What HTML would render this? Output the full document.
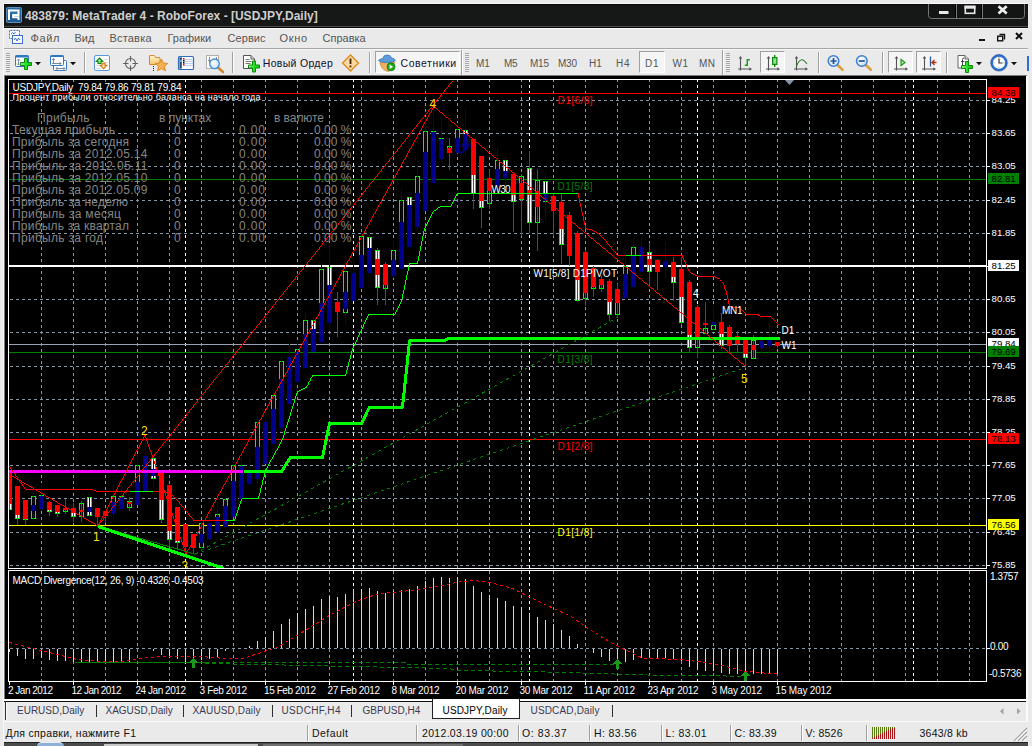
<!DOCTYPE html>
<html lang="ru"><head><meta charset="utf-8"><title>483879: MetaTrader 4 - RoboForex - [USDJPY,Daily]</title>
<style>
html,body{margin:0;padding:0}
body{width:1032px;height:746px;overflow:hidden;background:#eaeaea;position:relative;font-family:"Liberation Sans",sans-serif}
.t{position:absolute;white-space:nowrap;font-family:"Liberation Sans",sans-serif}
.r{position:absolute}
#win{position:absolute;left:4px;top:4px;width:1024px;height:742px;background:#eaeaea}
#chart{position:absolute;left:0;top:0}
svg text{font-family:"Liberation Sans",sans-serif}
</style></head><body>
<div id="win"></div>

<div id="titlebar" class="r" style="left:4px;top:4px;width:1024px;height:24px;background:#161818;box-sizing:border-box;border-top:1px solid #050505;border-bottom:1px solid #080808;box-shadow:inset 0 -1px 0 #4a4c4c"></div>
<svg class="r" style="left:6px;top:7px" width="17" height="17" viewBox="0 0 17 17">
<rect x="0.5" y="0.5" width="15" height="15" rx="1" fill="#1f5c8f" stroke="#5b8fc0"/>
<rect x="1.5" y="1.5" width="13" height="6" fill="#2f79b3" opacity=".8"/>
<path d="M3 13V3.5h9.5v4.5H7.2v2.2h5.3V13" fill="none" stroke="#fff" stroke-width="2"/>
</svg>
<span id="t1" class="t" style="left:24.9px;top:9.34px;font-size:12px;line-height:14px;color:#cfcfcf;font-weight:bold;">483879: MetaTrader 4 - RoboForex - [USDJPY,Daily]</span>
<svg class="r" style="left:926px;top:4px" width="102" height="17" viewBox="0 0 102 17">
<path d="M2.500 0V11.500Q2.500 14.500 5.500 14.500H95.500Q98.500 14.500 98.500 11.500V0" fill="#131414" stroke="#747676"/>
<path d="M30.5 0V14M56.5 0V14" stroke="#7a7a7a"/>
<path d="M29.5 0V14M55.5 0V14" stroke="#000"/>
<rect x="13" y="7" width="9.5" height="3" fill="#e8e8e8"/>
<rect x="39.300" y="2.500" width="9.400" height="6.800" fill="none" stroke="#e8e8e8" stroke-width="1.600"/>
<rect x="38.500" y="1.700" width="11" height="3" fill="#e8e8e8"/>
<path d="M72.500 2.300l8.200 7.200M80.700 2.300l-8.200 7.200" stroke="#eaeaea" stroke-width="2.800"/>
</svg>
<div id="menubar" class="r" style="left:4px;top:28px;width:1024px;height:20px;background:#eaeaea"></div>
<svg class="r" style="left:8px;top:29px" width="16" height="16" viewBox="0 0 16 16">
<rect x="1.5" y="1.5" width="10" height="8" fill="#fff" stroke="#3b6fd0" stroke-dasharray="1 0.5"/>
<rect x="4.5" y="6.5" width="10" height="8" fill="#fff" stroke="#3b6fd0"/>
<path d="M6 11l1.5-2 1.5 3 1.5-3 1.5 2" fill="none" stroke="#3b6fd0"/>
<path d="M3 5l1.5-1.5L6 5l1.5-2" fill="none" stroke="#3b6fd0"/>
</svg>
<span id="t2" class="t" style="left:30.5px;top:31.69px;font-size:11px;line-height:13px;color:#555;letter-spacing:0.651px;">Файл</span>
<span id="t3" class="t" style="left:74.5px;top:31.69px;font-size:11px;line-height:13px;color:#555;">Вид</span>
<span id="t4" class="t" style="left:109.5px;top:31.69px;font-size:11px;line-height:13px;color:#555;letter-spacing:0.185px;">Вставка</span>
<span id="t5" class="t" style="left:167.5px;top:31.69px;font-size:11px;line-height:13px;color:#555;">Графики</span>
<span id="t6" class="t" style="left:227.5px;top:31.69px;font-size:11px;line-height:13px;color:#555;letter-spacing:0.066px;">Сервис</span>
<span id="t7" class="t" style="left:279.5px;top:31.69px;font-size:11px;line-height:13px;color:#555;letter-spacing:0.646px;">Окно</span>
<span id="t8" class="t" style="left:322.5px;top:31.69px;font-size:11px;line-height:13px;color:#555;">Справка</span>
<svg class="r" style="left:976px;top:28px" width="52" height="20" viewBox="0 0 52 20">
<rect x="3" y="11" width="6" height="2" fill="#111"/>
<path d="M23.5 6.500h5v5" fill="none" stroke="#111" stroke-width="1.4"/>
<rect x="21.7" y="8.200" width="5" height="4.600" fill="#eaeaea" stroke="#111" stroke-width="1.4"/>
<path d="M40 5l6 6M46 5l-6 6" stroke="#111" stroke-width="2"/>
</svg>
<div class="r" style="left:4px;top:48px;width:1024px;height:1px;background:#a6a6a6;"></div>
<div class="r" style="left:4px;top:49px;width:1024px;height:1px;background:#f6f6f6;"></div>
<div class="r" style="left:4px;top:28px;width:1024px;height:1px;background:#fbfbfb;"></div>
<div class="r" style="left:4px;top:3px;width:1024px;height:1px;background:#fbfbfb;"></div>
<div id="toolbar" class="r" style="left:4px;top:50px;width:1024px;height:25px;background:#eaeaea"></div>
<div class="r" style="left:6px;top:53px;width:4px;height:1px;background:#a8a8a8;"></div><div class="r" style="left:6px;top:55px;width:4px;height:1px;background:#a8a8a8;"></div><div class="r" style="left:6px;top:57px;width:4px;height:1px;background:#a8a8a8;"></div><div class="r" style="left:6px;top:59px;width:4px;height:1px;background:#a8a8a8;"></div><div class="r" style="left:6px;top:61px;width:4px;height:1px;background:#a8a8a8;"></div><div class="r" style="left:6px;top:63px;width:4px;height:1px;background:#a8a8a8;"></div><div class="r" style="left:6px;top:65px;width:4px;height:1px;background:#a8a8a8;"></div><div class="r" style="left:6px;top:67px;width:4px;height:1px;background:#a8a8a8;"></div><div class="r" style="left:6px;top:69px;width:4px;height:1px;background:#a8a8a8;"></div><div class="r" style="left:6px;top:71px;width:4px;height:1px;background:#a8a8a8;"></div>
<div class="r" style="left:465px;top:53px;width:4px;height:1px;background:#a8a8a8;"></div><div class="r" style="left:465px;top:55px;width:4px;height:1px;background:#a8a8a8;"></div><div class="r" style="left:465px;top:57px;width:4px;height:1px;background:#a8a8a8;"></div><div class="r" style="left:465px;top:59px;width:4px;height:1px;background:#a8a8a8;"></div><div class="r" style="left:465px;top:61px;width:4px;height:1px;background:#a8a8a8;"></div><div class="r" style="left:465px;top:63px;width:4px;height:1px;background:#a8a8a8;"></div><div class="r" style="left:465px;top:65px;width:4px;height:1px;background:#a8a8a8;"></div><div class="r" style="left:465px;top:67px;width:4px;height:1px;background:#a8a8a8;"></div><div class="r" style="left:465px;top:69px;width:4px;height:1px;background:#a8a8a8;"></div><div class="r" style="left:465px;top:71px;width:4px;height:1px;background:#a8a8a8;"></div>
<div class="r" style="left:726px;top:53px;width:4px;height:1px;background:#a8a8a8;"></div><div class="r" style="left:726px;top:55px;width:4px;height:1px;background:#a8a8a8;"></div><div class="r" style="left:726px;top:57px;width:4px;height:1px;background:#a8a8a8;"></div><div class="r" style="left:726px;top:59px;width:4px;height:1px;background:#a8a8a8;"></div><div class="r" style="left:726px;top:61px;width:4px;height:1px;background:#a8a8a8;"></div><div class="r" style="left:726px;top:63px;width:4px;height:1px;background:#a8a8a8;"></div><div class="r" style="left:726px;top:65px;width:4px;height:1px;background:#a8a8a8;"></div><div class="r" style="left:726px;top:67px;width:4px;height:1px;background:#a8a8a8;"></div><div class="r" style="left:726px;top:69px;width:4px;height:1px;background:#a8a8a8;"></div><div class="r" style="left:726px;top:71px;width:4px;height:1px;background:#a8a8a8;"></div>
<div class="r" style="left:84px;top:52px;width:1px;height:21px;background:#a0a0a0;"></div><div class="r" style="left:85px;top:52px;width:1px;height:21px;background:#fdfdfd;"></div>
<div class="r" style="left:232px;top:52px;width:1px;height:21px;background:#a0a0a0;"></div><div class="r" style="left:233px;top:52px;width:1px;height:21px;background:#fdfdfd;"></div>
<div class="r" style="left:369px;top:52px;width:1px;height:21px;background:#a0a0a0;"></div><div class="r" style="left:370px;top:52px;width:1px;height:21px;background:#fdfdfd;"></div>
<div class="r" style="left:818px;top:52px;width:1px;height:21px;background:#a0a0a0;"></div><div class="r" style="left:819px;top:52px;width:1px;height:21px;background:#fdfdfd;"></div>
<div class="r" style="left:882px;top:52px;width:1px;height:21px;background:#a0a0a0;"></div><div class="r" style="left:883px;top:52px;width:1px;height:21px;background:#fdfdfd;"></div>
<div class="r" style="left:946px;top:52px;width:1px;height:21px;background:#a0a0a0;"></div><div class="r" style="left:947px;top:52px;width:1px;height:21px;background:#fdfdfd;"></div>
<div class="r" style="left:461px;top:50px;width:1px;height:25px;background:#a0a0a0;"></div><div class="r" style="left:462px;top:50px;width:1px;height:25px;background:#fdfdfd;"></div>
<div class="r" style="left:722px;top:50px;width:1px;height:25px;background:#a0a0a0;"></div><div class="r" style="left:723px;top:50px;width:1px;height:25px;background:#fdfdfd;"></div>
<svg class="r" style="left:34.5px;top:62px" width="6" height="4" viewBox="0 0 6 4"><path d="M0 0h6l-3 3.300z" fill="#111"/></svg>
<svg class="r" style="left:69.5px;top:62px" width="6" height="4" viewBox="0 0 6 4"><path d="M0 0h6l-3 3.300z" fill="#111"/></svg>
<svg class="r" style="left:975.5px;top:62px" width="6" height="4" viewBox="0 0 6 4"><path d="M0 0h6l-3 3.300z" fill="#111"/></svg>
<svg class="r" style="left:1010.5px;top:62px" width="6" height="4" viewBox="0 0 6 4"><path d="M0 0h6l-3 3.300z" fill="#111"/></svg>
<div class="r" style="left:375px;top:51px;width:85px;height:22px;background:#f5f5f5;box-sizing:border-box;border:1px solid #a0a0a0;border-right-color:#fff;border-bottom-color:#fff"></div>
<div class="r" style="left:639px;top:51px;width:26px;height:22px;background:#f5f5f5;box-sizing:border-box;border:1px solid #a0a0a0;border-right-color:#fff;border-bottom-color:#fff"></div>
<div class="r" style="left:760px;top:51px;width:25px;height:22px;background:#f5f5f5;box-sizing:border-box;border:1px solid #a0a0a0;border-right-color:#fff;border-bottom-color:#fff"></div>
<div class="r" style="left:888px;top:51px;width:25px;height:22px;background:#f5f5f5;box-sizing:border-box;border:1px solid #a0a0a0;border-right-color:#fff;border-bottom-color:#fff"></div>
<div class="r" style="left:916px;top:51px;width:25px;height:22px;background:#f5f5f5;box-sizing:border-box;border:1px solid #a0a0a0;border-right-color:#fff;border-bottom-color:#fff"></div>
<svg id="tbicons" class="r" style="left:0;top:50px" width="1032" height="26" viewBox="0 50 1032 26">
<defs>
<linearGradient id="gp" x1="0" x2="1" y1="0" y2="0"><stop offset="0" stop-color="#9df09d"/><stop offset=".5" stop-color="#22e022"/><stop offset="1" stop-color="#10c810"/></linearGradient>
<linearGradient id="fo" x1="0" x2="0" y1="0" y2="1"><stop offset="0" stop-color="#fff3cf"/><stop offset="1" stop-color="#f7c56a"/></linearGradient>
<radialGradient id="lens" cx=".4" cy=".35" r=".7"><stop offset="0" stop-color="#ffffff"/><stop offset="1" stop-color="#c4dcf6"/></radialGradient>
<g id="plus"><path d="M-1.500-5.500h3v4h4v3h-4v4h-3v-4h-4v-3h4z" fill="url(#gp)" stroke="#0c8a0c" stroke-width="1"/></g>
<g id="axes"><path d="M2.500 0.500v13.500M0 12.500h13" stroke="#555" stroke-width="1.100" fill="none"/><path d="M2.500 -0.500l-1.800 2.600h3.600zM14 12.500l-2.600-1.800v3.600z" fill="#555"/></g>
</defs>
<!-- new chart -->
<rect x="15.500" y="55.500" width="13" height="11" rx="1" fill="#fff" stroke="#2f78c4"/>
<rect x="15.500" y="55.500" width="13" height="2" fill="#2f78c4"/>
<path d="M18.500 59v6M17 60.500l1.500-1.500 1.500 1.500M17 63.500l1.500 1.500 1.500-1.500" stroke="#8090a0" fill="none"/>
<use href="#plus" x="26" y="64"/>
<!-- profiles -->
<rect x="53.500" y="60.500" width="13" height="10" rx="1" fill="#fff" stroke="#2f78c4"/>
<rect x="50.500" y="55.500" width="13" height="10" rx="1" fill="#fff" stroke="#2f78c4"/>
<rect x="50.500" y="55.500" width="13" height="1.500" fill="#2f78c4"/>
<path d="M53.500 58.500v5M52 63.500h9M59.500 62l1.500 1.500-1.500 1.500M52 60l1.500-1.500 1.500 1.500M56 68.500h9M57.500 67l-1.500 1.500 1.500 1.500M63.500 67l1.500 1.500-1.500 1.500" stroke="#7a8898" fill="none"/>
<!-- market watch -->
<rect x="94.500" y="55.500" width="15" height="15" rx="1.500" fill="#fff" stroke="#5b9bdc"/>
<path d="M104 59.500h4M104 62.500h4M96 65.500h4M96 68.500h5" stroke="#d8d8d8"/>
<path d="M99.500 58l3.300 3.500h-1.800v2h-3v-2h-1.800z" fill="#9fe09f" stroke="#0c8a0c" stroke-width="1.100"/>
<path d="M103.500 68.800l3.300-3.500h-1.800v-2h-3v2h-1.800z" fill="#fbd9a0" stroke="#c87810" stroke-width="1.100"/>
<!-- crosshair -->
<circle cx="130.500" cy="63.500" r="5" fill="none" stroke="#666" stroke-width="1.100"/>
<path d="M130.500 56v5.500M130.500 65.500v5.500M123 63.500h5.500M132.500 63.500h5.500" stroke="#606060" stroke-width="1.100"/>
<!-- folder star -->
<path d="M149.500 64.500v-8.500q0-0.500 0.500-0.500h4q0.500 0 1 1l0.500 1h4q0.500 0 0.500 0.500v6.500z" fill="url(#fo)" stroke="#d08a28"/>
<path d="M161.500 59l1.900 4 4.300 0.500-3.200 3 0.900 4.300-3.900-2.200-3.900 2.200 0.900-4.300-3.200-3 4.300-0.500z" fill="#f5b050" stroke="#d98020" stroke-width=".9"/>
<path d="M153 66h1v1h-1zM153 68h1v1h-1zM153 70h1v1h-1z" fill="#222"/>
<!-- terminal -->
<rect x="178.500" y="56.500" width="15" height="13" rx="1" fill="#fff" stroke="#2f6fc0" stroke-width="1.200"/>
<rect x="179" y="57" width="3" height="12" fill="#6fa4e4"/>
<path d="M183 59.500h10M183 61.500h10M183 63.500h10M183 65.500h10" stroke="#bcd0f0"/>
<path d="M180 58h1.500v1.500h-1.500zM183 60h1.500v1.500h-1.500zM183 62h1.500v1.500h-1.500z" fill="#111"/>
<rect x="180.200" y="62" width="1.200" height="6" fill="#203040"/>
<path d="M183 58h1.500v1.500h-1.500zM183 64h1.500v1.500h-1.500z" fill="#f01010"/>
<!-- strategy tester -->
<rect x="206.500" y="55.500" width="12" height="13" fill="#fdfdfd" stroke="#b0b0b0"/>
<path d="M209.500 57v6M216.500 57v5M208 60.500h3M215 59.500h3" stroke="#8a8a8a"/>
<path d="M218 67.500l5 4.500" stroke="#c98a30" stroke-width="2.600" stroke-linecap="round"/>
<circle cx="214.500" cy="63.800" r="4.800" fill="url(#lens)" fill-opacity=".85" stroke="#3c8cdc" stroke-width="1.300"/>
<!-- new order -->
<path d="M243.500 55.500h7.500l3.500 3.500v9.500h-11z" fill="#fff" stroke="#555"/>
<path d="M251 55.500v3.500h3.500" fill="#ddd" stroke="#555"/>
<path d="M245.500 59.500h4M245.500 61.500h6M245.500 63.500h5" stroke="#777"/>
<use href="#plus" x="254" y="66.500"/>
<!-- alert diamond -->
<path d="M350.500 55l8 8-8 8-8-8z" fill="#fbd9a0" stroke="#d98a20" stroke-width="1.300"/>
<path d="M350.500 58.500v5.500" stroke="#402000" stroke-width="1.800"/><rect x="349.600" y="65.500" width="1.800" height="1.800" fill="#402000"/>
<!-- expert advisors -->
<path d="M380 62q1 8 8 9.500 5-1 6.500-9.500z" fill="#f0b060" stroke="#c88030" stroke-width=".8"/>
<path d="M378.500 60.500q1.500-2 4.500-2 0-3.500 4-3.500t4.500 3q3 0 4 2.500-2 2-8.500 2t-8.500-2z" fill="#5b9bd8" stroke="#3a78b8" stroke-width=".8"/>
<circle cx="391" cy="66.800" r="4" fill="#1faa1f" stroke="#0a7a0a" stroke-width=".8"/>
<path d="M389.700 64.500l3.300 2.300-3.300 2.300z" fill="#fff"/>
<!-- bar chart -->
<use href="#axes" x="738" y="56.500"/>
<path d="M747.300 59v7M744.800 65.300h2.500M747.300 59.700h2.500" stroke="#1a9a1a" stroke-width="1.500" fill="none"/>
<!-- candle chart -->
<use href="#axes" x="766" y="56.500"/>
<path d="M774.700 55v12" stroke="#0c8a0c" stroke-width="1.400"/>
<rect x="772.600" y="57.600" width="4.300" height="6.800" fill="#8fe08f" stroke="#0c8a0c" stroke-width="1.200"/>
<!-- line chart -->
<use href="#axes" x="794" y="56.500"/>
<path d="M796.500 66q2.500-6.300 5.500-6.300 2 0 5 4.300" stroke="#2a7a2a" stroke-width="1.100" fill="none"/>
<!-- zoom in -->
<path d="M837.500 65l5 4.800" stroke="#d8a040" stroke-width="2.600" stroke-linecap="round"/>
<circle cx="833.500" cy="61" r="5.300" fill="url(#lens)" stroke="#3b7fd8" stroke-width="1.500"/>
<path d="M830.500 61h6M833.500 58v6" stroke="#2050a0" stroke-width="1.700"/>
<!-- zoom out -->
<path d="M865.800 65l5 4.800" stroke="#d8a040" stroke-width="2.600" stroke-linecap="round"/>
<circle cx="861.800" cy="61" r="5.300" fill="url(#lens)" stroke="#3b7fd8" stroke-width="1.500"/>
<path d="M858.800 61h6" stroke="#2050a0" stroke-width="1.700"/>
<!-- autoscroll -->
<use href="#axes" x="894" y="56.500"/>
<path d="M901 59.500v6l4-3z" fill="#bfe8bf" stroke="#1a9a1a" stroke-width="1.200"/>
<!-- chart shift -->
<use href="#axes" x="922" y="56.500"/>
<path d="M930.500 56.500v10" stroke="#2a5aa0" stroke-width="1.300"/>
<path d="M932 62.500h4.500M934.500 60l-2.500 2.500 2.500 2.500" stroke="#b03010" stroke-width="1.300" fill="none"/>
<!-- indicators -->
<path d="M958 55.500h7l3.500 3.500v9h-10.500z" fill="#fff" stroke="#666"/>
<path d="M965 55.500v3.500h3.500" fill="#ddd" stroke="#666"/>
<path d="M962.500 66v-6.500q0-1.500 1.800-1.500M961 61.500h3.500" stroke="#444" fill="none"/>
<use href="#plus" x="967" y="67"/>
<!-- clock -->
<circle cx="999" cy="62.800" r="7.200" fill="#fff" stroke="#2a6ed0" stroke-width="2.200"/>
<circle cx="999" cy="62.800" r="8.300" fill="none" stroke="#1a4a9a" stroke-width=".6"/>
<path d="M999 58.500v4.500h3.500" stroke="#333" stroke-width="1.200" fill="none"/>
<path d="M999 57v1M999 67.500v1M993.500 62.800h1M1003.500 62.800h1" stroke="#888"/>
</svg>

<span id="t9" class="t" style="left:262.8px;top:56.86px;font-size:10.5px;line-height:13px;color:#101030;letter-spacing:0.309px;">Новый Ордер</span>
<span id="t10" class="t" style="left:400.5px;top:56.86px;font-size:10.5px;line-height:13px;color:#101030;letter-spacing:0.548px;">Советники</span>
<span id="t11" class="t" style="left:476px;top:57.53px;font-size:10px;line-height:12px;color:#555;">M1</span>
<span id="t12" class="t" style="left:504px;top:57.53px;font-size:10px;line-height:12px;color:#555;letter-spacing:-0.406px;">M5</span>
<span id="t13" class="t" style="left:530px;top:57.53px;font-size:10px;line-height:12px;color:#555;letter-spacing:-0.227px;">M15</span>
<span id="t14" class="t" style="left:558px;top:57.53px;font-size:10px;line-height:12px;color:#555;letter-spacing:-0.227px;">M30</span>
<span id="t15" class="t" style="left:589px;top:57.53px;font-size:10px;line-height:12px;color:#555;">H1</span>
<span id="t16" class="t" style="left:616px;top:57.53px;font-size:10px;line-height:12px;color:#555;letter-spacing:0.703px;">H4</span>
<span id="t17" class="t" style="left:645px;top:57.53px;font-size:10px;line-height:12px;color:#555;letter-spacing:0.703px;">D1</span>
<span id="t18" class="t" style="left:672.5px;top:57.53px;font-size:10px;line-height:12px;color:#555;letter-spacing:0.500px;">W1</span>
<span id="t19" class="t" style="left:699px;top:57.53px;font-size:10px;line-height:12px;color:#555;letter-spacing:0.438px;">MN</span>
<div class="r" style="left:1027px;top:56px;width:2px;height:15px;background:#2f6fd0;"></div>
<div class="r" style="left:4px;top:75px;width:1023px;height:624px;background:#7a7a7a;"></div>
<div class="r" style="left:5px;top:76px;width:1021px;height:623px;background:#000;"></div>
<svg id="chart" width="1032" height="746" viewBox="0 0 1032 746" style="position:absolute;left:0;top:0" shape-rendering="crispEdges">
<g id="grid">
<line x1="10" y1="100.5" x2="986" y2="100.5" stroke="#8797a8" stroke-width="1" stroke-dasharray="3 3"/>
<line x1="986" y1="100.5" x2="990" y2="100.5" stroke="#fff" stroke-width="1"/>
<line x1="10" y1="133.5" x2="986" y2="133.5" stroke="#8797a8" stroke-width="1" stroke-dasharray="3 3"/>
<line x1="986" y1="133.5" x2="990" y2="133.5" stroke="#fff" stroke-width="1"/>
<line x1="10" y1="166.5" x2="986" y2="166.5" stroke="#8797a8" stroke-width="1" stroke-dasharray="3 3"/>
<line x1="986" y1="166.5" x2="990" y2="166.5" stroke="#fff" stroke-width="1"/>
<line x1="10" y1="200.5" x2="986" y2="200.5" stroke="#8797a8" stroke-width="1" stroke-dasharray="3 3"/>
<line x1="986" y1="200.5" x2="990" y2="200.5" stroke="#fff" stroke-width="1"/>
<line x1="10" y1="233.5" x2="986" y2="233.5" stroke="#8797a8" stroke-width="1" stroke-dasharray="3 3"/>
<line x1="986" y1="233.5" x2="990" y2="233.5" stroke="#fff" stroke-width="1"/>
<line x1="10" y1="266.5" x2="986" y2="266.5" stroke="#8797a8" stroke-width="1" stroke-dasharray="3 3"/>
<line x1="986" y1="266.5" x2="990" y2="266.5" stroke="#fff" stroke-width="1"/>
<line x1="10" y1="299.5" x2="986" y2="299.5" stroke="#8797a8" stroke-width="1" stroke-dasharray="3 3"/>
<line x1="986" y1="299.5" x2="990" y2="299.5" stroke="#fff" stroke-width="1"/>
<line x1="10" y1="332.5" x2="986" y2="332.5" stroke="#8797a8" stroke-width="1" stroke-dasharray="3 3"/>
<line x1="986" y1="332.5" x2="990" y2="332.5" stroke="#fff" stroke-width="1"/>
<line x1="10" y1="366.5" x2="986" y2="366.5" stroke="#8797a8" stroke-width="1" stroke-dasharray="3 3"/>
<line x1="986" y1="366.5" x2="990" y2="366.5" stroke="#fff" stroke-width="1"/>
<line x1="10" y1="399.5" x2="986" y2="399.5" stroke="#8797a8" stroke-width="1" stroke-dasharray="3 3"/>
<line x1="986" y1="399.5" x2="990" y2="399.5" stroke="#fff" stroke-width="1"/>
<line x1="10" y1="432.5" x2="986" y2="432.5" stroke="#8797a8" stroke-width="1" stroke-dasharray="3 3"/>
<line x1="986" y1="432.5" x2="990" y2="432.5" stroke="#fff" stroke-width="1"/>
<line x1="10" y1="465.5" x2="986" y2="465.5" stroke="#8797a8" stroke-width="1" stroke-dasharray="3 3"/>
<line x1="986" y1="465.5" x2="990" y2="465.5" stroke="#fff" stroke-width="1"/>
<line x1="10" y1="498.5" x2="986" y2="498.5" stroke="#8797a8" stroke-width="1" stroke-dasharray="3 3"/>
<line x1="986" y1="498.5" x2="990" y2="498.5" stroke="#fff" stroke-width="1"/>
<line x1="10" y1="532.5" x2="986" y2="532.5" stroke="#8797a8" stroke-width="1" stroke-dasharray="3 3"/>
<line x1="986" y1="532.5" x2="990" y2="532.5" stroke="#fff" stroke-width="1"/>
<line x1="10" y1="565.5" x2="986" y2="565.5" stroke="#8797a8" stroke-width="1" stroke-dasharray="3 3"/>
<line x1="986" y1="565.5" x2="990" y2="565.5" stroke="#fff" stroke-width="1"/>
<line x1="41.5" y1="79" x2="41.5" y2="568" stroke="#8797a8" stroke-width="1" stroke-dasharray="3 3"/>
<line x1="41.5" y1="571" x2="41.5" y2="681" stroke="#8797a8" stroke-width="1" stroke-dasharray="3 3"/>
<line x1="73.5" y1="79" x2="73.5" y2="568" stroke="#8797a8" stroke-width="1" stroke-dasharray="3 3"/>
<line x1="73.5" y1="571" x2="73.5" y2="681" stroke="#8797a8" stroke-width="1" stroke-dasharray="3 3"/>
<line x1="105.5" y1="79" x2="105.5" y2="568" stroke="#8797a8" stroke-width="1" stroke-dasharray="3 3"/>
<line x1="105.5" y1="571" x2="105.5" y2="681" stroke="#8797a8" stroke-width="1" stroke-dasharray="3 3"/>
<line x1="137.5" y1="79" x2="137.5" y2="568" stroke="#8797a8" stroke-width="1" stroke-dasharray="3 3"/>
<line x1="137.5" y1="571" x2="137.5" y2="681" stroke="#8797a8" stroke-width="1" stroke-dasharray="3 3"/>
<line x1="169.5" y1="79" x2="169.5" y2="568" stroke="#8797a8" stroke-width="1" stroke-dasharray="3 3"/>
<line x1="169.5" y1="571" x2="169.5" y2="681" stroke="#8797a8" stroke-width="1" stroke-dasharray="3 3"/>
<line x1="201.5" y1="79" x2="201.5" y2="568" stroke="#8797a8" stroke-width="1" stroke-dasharray="3 3"/>
<line x1="201.5" y1="571" x2="201.5" y2="681" stroke="#8797a8" stroke-width="1" stroke-dasharray="3 3"/>
<line x1="233.5" y1="79" x2="233.5" y2="568" stroke="#8797a8" stroke-width="1" stroke-dasharray="3 3"/>
<line x1="233.5" y1="571" x2="233.5" y2="681" stroke="#8797a8" stroke-width="1" stroke-dasharray="3 3"/>
<line x1="265.5" y1="79" x2="265.5" y2="568" stroke="#8797a8" stroke-width="1" stroke-dasharray="3 3"/>
<line x1="265.5" y1="571" x2="265.5" y2="681" stroke="#8797a8" stroke-width="1" stroke-dasharray="3 3"/>
<line x1="297.5" y1="79" x2="297.5" y2="568" stroke="#8797a8" stroke-width="1" stroke-dasharray="3 3"/>
<line x1="297.5" y1="571" x2="297.5" y2="681" stroke="#8797a8" stroke-width="1" stroke-dasharray="3 3"/>
<line x1="329.5" y1="79" x2="329.5" y2="568" stroke="#8797a8" stroke-width="1" stroke-dasharray="3 3"/>
<line x1="329.5" y1="571" x2="329.5" y2="681" stroke="#8797a8" stroke-width="1" stroke-dasharray="3 3"/>
<line x1="361.5" y1="79" x2="361.5" y2="568" stroke="#8797a8" stroke-width="1" stroke-dasharray="3 3"/>
<line x1="361.5" y1="571" x2="361.5" y2="681" stroke="#8797a8" stroke-width="1" stroke-dasharray="3 3"/>
<line x1="393.5" y1="79" x2="393.5" y2="568" stroke="#8797a8" stroke-width="1" stroke-dasharray="3 3"/>
<line x1="393.5" y1="571" x2="393.5" y2="681" stroke="#8797a8" stroke-width="1" stroke-dasharray="3 3"/>
<line x1="425.5" y1="79" x2="425.5" y2="568" stroke="#8797a8" stroke-width="1" stroke-dasharray="3 3"/>
<line x1="425.5" y1="571" x2="425.5" y2="681" stroke="#8797a8" stroke-width="1" stroke-dasharray="3 3"/>
<line x1="457.5" y1="79" x2="457.5" y2="568" stroke="#8797a8" stroke-width="1" stroke-dasharray="3 3"/>
<line x1="457.5" y1="571" x2="457.5" y2="681" stroke="#8797a8" stroke-width="1" stroke-dasharray="3 3"/>
<line x1="489.5" y1="79" x2="489.5" y2="568" stroke="#8797a8" stroke-width="1" stroke-dasharray="3 3"/>
<line x1="489.5" y1="571" x2="489.5" y2="681" stroke="#8797a8" stroke-width="1" stroke-dasharray="3 3"/>
<line x1="521.5" y1="79" x2="521.5" y2="568" stroke="#8797a8" stroke-width="1" stroke-dasharray="3 3"/>
<line x1="521.5" y1="571" x2="521.5" y2="681" stroke="#8797a8" stroke-width="1" stroke-dasharray="3 3"/>
<line x1="553.5" y1="79" x2="553.5" y2="568" stroke="#8797a8" stroke-width="1" stroke-dasharray="3 3"/>
<line x1="553.5" y1="571" x2="553.5" y2="681" stroke="#8797a8" stroke-width="1" stroke-dasharray="3 3"/>
<line x1="585.5" y1="79" x2="585.5" y2="568" stroke="#8797a8" stroke-width="1" stroke-dasharray="3 3"/>
<line x1="585.5" y1="571" x2="585.5" y2="681" stroke="#8797a8" stroke-width="1" stroke-dasharray="3 3"/>
<line x1="617.5" y1="79" x2="617.5" y2="568" stroke="#8797a8" stroke-width="1" stroke-dasharray="3 3"/>
<line x1="617.5" y1="571" x2="617.5" y2="681" stroke="#8797a8" stroke-width="1" stroke-dasharray="3 3"/>
<line x1="649.5" y1="79" x2="649.5" y2="568" stroke="#8797a8" stroke-width="1" stroke-dasharray="3 3"/>
<line x1="649.5" y1="571" x2="649.5" y2="681" stroke="#8797a8" stroke-width="1" stroke-dasharray="3 3"/>
<line x1="681.5" y1="79" x2="681.5" y2="568" stroke="#8797a8" stroke-width="1" stroke-dasharray="3 3"/>
<line x1="681.5" y1="571" x2="681.5" y2="681" stroke="#8797a8" stroke-width="1" stroke-dasharray="3 3"/>
<line x1="713.5" y1="79" x2="713.5" y2="568" stroke="#8797a8" stroke-width="1" stroke-dasharray="3 3"/>
<line x1="713.5" y1="571" x2="713.5" y2="681" stroke="#8797a8" stroke-width="1" stroke-dasharray="3 3"/>
<line x1="745.5" y1="79" x2="745.5" y2="568" stroke="#8797a8" stroke-width="1" stroke-dasharray="3 3"/>
<line x1="745.5" y1="571" x2="745.5" y2="681" stroke="#8797a8" stroke-width="1" stroke-dasharray="3 3"/>
<line x1="777.5" y1="79" x2="777.5" y2="568" stroke="#8797a8" stroke-width="1" stroke-dasharray="3 3"/>
<line x1="777.5" y1="571" x2="777.5" y2="681" stroke="#8797a8" stroke-width="1" stroke-dasharray="3 3"/>
<line x1="809.5" y1="79" x2="809.5" y2="568" stroke="#8797a8" stroke-width="1" stroke-dasharray="3 3"/>
<line x1="809.5" y1="571" x2="809.5" y2="681" stroke="#8797a8" stroke-width="1" stroke-dasharray="3 3"/>
<line x1="841.5" y1="79" x2="841.5" y2="568" stroke="#8797a8" stroke-width="1" stroke-dasharray="3 3"/>
<line x1="841.5" y1="571" x2="841.5" y2="681" stroke="#8797a8" stroke-width="1" stroke-dasharray="3 3"/>
<line x1="873.5" y1="79" x2="873.5" y2="568" stroke="#8797a8" stroke-width="1" stroke-dasharray="3 3"/>
<line x1="873.5" y1="571" x2="873.5" y2="681" stroke="#8797a8" stroke-width="1" stroke-dasharray="3 3"/>
<line x1="905.5" y1="79" x2="905.5" y2="568" stroke="#8797a8" stroke-width="1" stroke-dasharray="3 3"/>
<line x1="905.5" y1="571" x2="905.5" y2="681" stroke="#8797a8" stroke-width="1" stroke-dasharray="3 3"/>
<line x1="937.5" y1="79" x2="937.5" y2="568" stroke="#8797a8" stroke-width="1" stroke-dasharray="3 3"/>
<line x1="937.5" y1="571" x2="937.5" y2="681" stroke="#8797a8" stroke-width="1" stroke-dasharray="3 3"/>
<line x1="969.5" y1="79" x2="969.5" y2="568" stroke="#8797a8" stroke-width="1" stroke-dasharray="3 3"/>
<line x1="969.5" y1="571" x2="969.5" y2="681" stroke="#8797a8" stroke-width="1" stroke-dasharray="3 3"/>
<line x1="185.5" y1="79" x2="185.5" y2="568" stroke="#fff" stroke-width="1" stroke-dasharray="3 3"/>
<line x1="185.5" y1="571" x2="185.5" y2="681" stroke="#fff" stroke-width="1" stroke-dasharray="3 3"/>
<line x1="353.5" y1="79" x2="353.5" y2="568" stroke="#fff" stroke-width="1" stroke-dasharray="3 3"/>
<line x1="353.5" y1="571" x2="353.5" y2="681" stroke="#fff" stroke-width="1" stroke-dasharray="3 3"/>
<line x1="529.5" y1="79" x2="529.5" y2="568" stroke="#fff" stroke-width="1" stroke-dasharray="3 3"/>
<line x1="529.5" y1="571" x2="529.5" y2="681" stroke="#fff" stroke-width="1" stroke-dasharray="3 3"/>
<line x1="697.5" y1="79" x2="697.5" y2="568" stroke="#fff" stroke-width="1" stroke-dasharray="3 3"/>
<line x1="697.5" y1="571" x2="697.5" y2="681" stroke="#fff" stroke-width="1" stroke-dasharray="3 3"/>
<line x1="913.5" y1="79" x2="913.5" y2="568" stroke="#fff" stroke-width="1" stroke-dasharray="3 3"/>
<line x1="913.5" y1="571" x2="913.5" y2="681" stroke="#fff" stroke-width="1" stroke-dasharray="3 3"/>
<line x1="10" y1="648.5" x2="986" y2="648.5" stroke="#8797a8" stroke-width="1" stroke-dasharray="3 3"/>
<line x1="986" y1="648.5" x2="990" y2="648.5" stroke="#fff" stroke-width="1"/>
</g>
<g id="levels">
<line x1="9" y1="93.5" x2="986" y2="93.5" stroke="#ff0000" stroke-width="1"/>
<line x1="9" y1="179.5" x2="986" y2="179.5" stroke="#008000" stroke-width="1"/>
<line x1="9" y1="266" x2="986" y2="266" stroke="#fff" stroke-width="2"/>
<line x1="9" y1="344.5" x2="986" y2="344.5" stroke="#98a2b4" stroke-width="1"/>
<line x1="9" y1="352.5" x2="986" y2="352.5" stroke="#008000" stroke-width="1"/>
<line x1="9" y1="439.5" x2="986" y2="439.5" stroke="#ff0000" stroke-width="1"/>
<line x1="9" y1="525.5" x2="986" y2="525.5" stroke="#ffff00" stroke-width="1"/>
</g>
<defs><clipPath id="cm"><rect x="9" y="80" width="977" height="488"/></clipPath></defs>
<g id="candles" clip-path="url(#cm)">
<rect x="7" y="503" width="5" height="7" fill="#00ff00"/>
<rect x="8" y="504" width="3" height="5" fill="#fff"/>
<rect x="9" y="473" width="1" height="37" fill="#ff0000"/>
<rect x="7" y="473" width="5" height="31" fill="#ff0000"/>
<rect x="15" y="514" width="5" height="5" fill="#00ff00"/>
<rect x="16" y="515" width="3" height="3" fill="#fff"/>
<rect x="17" y="486" width="1" height="39" fill="#ff0000"/>
<rect x="15" y="486" width="5" height="29" fill="#ff0000"/>
<rect x="23" y="517" width="5" height="3" fill="#00ff00"/>
<rect x="24" y="518" width="3" height="1" fill="#fff"/>
<rect x="25" y="500" width="1" height="25" fill="#ff0000"/>
<rect x="23" y="500" width="5" height="19" fill="#ff0000"/>
<rect x="31" y="496" width="5" height="23" fill="#00ff00"/>
<rect x="32" y="497" width="3" height="21" fill="#000"/>
<rect x="33" y="488" width="1" height="34" fill="#00008b"/>
<rect x="31" y="505" width="5" height="6" fill="#00008b"/>
<rect x="39" y="495" width="5" height="2" fill="#00ff00"/>
<rect x="41" y="483" width="1" height="26" fill="#00008b"/>
<rect x="39" y="496" width="5" height="13" fill="#00008b"/>
<rect x="47" y="508" width="5" height="4" fill="#00ff00"/>
<rect x="48" y="509" width="3" height="2" fill="#fff"/>
<rect x="49" y="501" width="1" height="15" fill="#ff0000"/>
<rect x="47" y="502" width="5" height="8" fill="#ff0000"/>
<rect x="55" y="510" width="5" height="4" fill="#00ff00"/>
<rect x="56" y="511" width="3" height="2" fill="#fff"/>
<rect x="57" y="505" width="1" height="11" fill="#ff0000"/>
<rect x="55" y="505" width="5" height="7" fill="#ff0000"/>
<rect x="63" y="509" width="5" height="3" fill="#00ff00"/>
<rect x="64" y="510" width="3" height="1" fill="#000"/>
<rect x="65" y="499" width="1" height="15" fill="#ff0000"/>
<rect x="63" y="508" width="5" height="2" fill="#ff0000"/>
<rect x="71" y="511" width="5" height="6" fill="#00ff00"/>
<rect x="72" y="512" width="3" height="4" fill="#fff"/>
<rect x="73" y="503" width="1" height="19" fill="#ff0000"/>
<rect x="71" y="508" width="5" height="5" fill="#ff0000"/>
<rect x="79" y="503" width="5" height="14" fill="#00ff00"/>
<rect x="80" y="504" width="3" height="12" fill="#000"/>
<rect x="81" y="501" width="1" height="21" fill="#ff0000"/>
<rect x="79" y="510" width="5" height="2" fill="#ff0000"/>
<rect x="87" y="497" width="5" height="19" fill="#00ff00"/>
<rect x="88" y="498" width="3" height="17" fill="#fff"/>
<rect x="89" y="497" width="1" height="23" fill="#00008b"/>
<rect x="87" y="507" width="5" height="5" fill="#00008b"/>
<rect x="97" y="508" width="1" height="19" fill="#ff0000"/>
<rect x="95" y="508" width="5" height="9" fill="#ff0000"/>
<rect x="105" y="511" width="1" height="12" fill="#ff0000"/>
<rect x="103" y="511" width="5" height="5" fill="#ff0000"/>
<rect x="111" y="496" width="5" height="8" fill="#00ff00"/>
<rect x="112" y="497" width="3" height="6" fill="#000"/>
<rect x="113" y="484" width="1" height="36" fill="#00008b"/>
<rect x="111" y="502" width="5" height="12" fill="#00008b"/>
<rect x="119" y="496" width="5" height="2" fill="#00ff00"/>
<rect x="121" y="484" width="1" height="25" fill="#00008b"/>
<rect x="119" y="497" width="5" height="12" fill="#00008b"/>
<rect x="127" y="501" width="5" height="7" fill="#00ff00"/>
<rect x="128" y="502" width="3" height="5" fill="#000"/>
<rect x="129" y="497" width="1" height="14" fill="#ff0000"/>
<rect x="127" y="502" width="5" height="2" fill="#ff0000"/>
<rect x="135" y="465" width="5" height="18" fill="#00ff00"/>
<rect x="136" y="466" width="3" height="16" fill="#000"/>
<rect x="137" y="454" width="1" height="51" fill="#00008b"/>
<rect x="135" y="482" width="5" height="23" fill="#00008b"/>
<rect x="145" y="436" width="1" height="56" fill="#00008b"/>
<rect x="143" y="456" width="5" height="36" fill="#00008b"/>
<rect x="151" y="458" width="5" height="21" fill="#00ff00"/>
<rect x="152" y="459" width="3" height="19" fill="#fff"/>
<rect x="153" y="454" width="1" height="34" fill="#00008b"/>
<rect x="151" y="469" width="5" height="7" fill="#00008b"/>
<rect x="159" y="499" width="5" height="21" fill="#00ff00"/>
<rect x="160" y="500" width="3" height="19" fill="#fff"/>
<rect x="161" y="472" width="1" height="51" fill="#ff0000"/>
<rect x="159" y="472" width="5" height="28" fill="#ff0000"/>
<rect x="167" y="530" width="5" height="10" fill="#00ff00"/>
<rect x="168" y="531" width="3" height="8" fill="#fff"/>
<rect x="169" y="485" width="1" height="62" fill="#ff0000"/>
<rect x="167" y="485" width="5" height="46" fill="#ff0000"/>
<rect x="175" y="539" width="5" height="4" fill="#00ff00"/>
<rect x="176" y="540" width="3" height="2" fill="#fff"/>
<rect x="177" y="507" width="1" height="43" fill="#ff0000"/>
<rect x="175" y="507" width="5" height="34" fill="#ff0000"/>
<rect x="185" y="524" width="1" height="31" fill="#ff0000"/>
<rect x="183" y="524" width="5" height="23" fill="#ff0000"/>
<rect x="193" y="534" width="1" height="20" fill="#ff0000"/>
<rect x="191" y="534" width="5" height="14" fill="#ff0000"/>
<rect x="199" y="523" width="5" height="25" fill="#00ff00"/>
<rect x="200" y="524" width="3" height="23" fill="#000"/>
<rect x="201" y="522" width="1" height="29" fill="#00008b"/>
<rect x="199" y="534" width="5" height="9" fill="#00008b"/>
<rect x="209" y="516" width="1" height="23" fill="#00008b"/>
<rect x="207" y="523" width="5" height="16" fill="#00008b"/>
<rect x="215" y="514" width="5" height="5" fill="#00ff00"/>
<rect x="216" y="515" width="3" height="3" fill="#000"/>
<rect x="217" y="502" width="1" height="30" fill="#00008b"/>
<rect x="215" y="517" width="5" height="15" fill="#00008b"/>
<rect x="223" y="499" width="5" height="9" fill="#00ff00"/>
<rect x="224" y="500" width="3" height="7" fill="#000"/>
<rect x="225" y="491" width="1" height="36" fill="#00008b"/>
<rect x="223" y="506" width="5" height="21" fill="#00008b"/>
<rect x="231" y="465" width="5" height="18" fill="#00ff00"/>
<rect x="232" y="466" width="3" height="16" fill="#000"/>
<rect x="233" y="461" width="1" height="56" fill="#00008b"/>
<rect x="231" y="481" width="5" height="36" fill="#00008b"/>
<rect x="239" y="465" width="5" height="2" fill="#00ff00"/>
<rect x="241" y="457" width="1" height="42" fill="#00008b"/>
<rect x="239" y="466" width="5" height="33" fill="#00008b"/>
<rect x="249" y="458" width="1" height="26" fill="#00008b"/>
<rect x="247" y="470" width="5" height="14" fill="#00008b"/>
<rect x="255" y="422" width="5" height="27" fill="#00ff00"/>
<rect x="256" y="423" width="3" height="25" fill="#000"/>
<rect x="257" y="416" width="1" height="68" fill="#00008b"/>
<rect x="255" y="447" width="5" height="32" fill="#00008b"/>
<rect x="265" y="410" width="1" height="54" fill="#00008b"/>
<rect x="263" y="422" width="5" height="42" fill="#00008b"/>
<rect x="271" y="395" width="5" height="16" fill="#00ff00"/>
<rect x="272" y="396" width="3" height="14" fill="#000"/>
<rect x="273" y="390" width="1" height="54" fill="#00008b"/>
<rect x="271" y="409" width="5" height="35" fill="#00008b"/>
<rect x="279" y="361" width="5" height="20" fill="#00ff00"/>
<rect x="280" y="362" width="3" height="18" fill="#000"/>
<rect x="281" y="357" width="1" height="71" fill="#00008b"/>
<rect x="279" y="379" width="5" height="49" fill="#00008b"/>
<rect x="289" y="342" width="1" height="62" fill="#00008b"/>
<rect x="287" y="357" width="5" height="47" fill="#00008b"/>
<rect x="295" y="349" width="5" height="5" fill="#00ff00"/>
<rect x="296" y="350" width="3" height="3" fill="#000"/>
<rect x="297" y="343" width="1" height="39" fill="#00008b"/>
<rect x="295" y="352" width="5" height="30" fill="#00008b"/>
<rect x="303" y="320" width="5" height="16" fill="#00ff00"/>
<rect x="304" y="321" width="3" height="14" fill="#000"/>
<rect x="305" y="313" width="1" height="55" fill="#00008b"/>
<rect x="303" y="334" width="5" height="34" fill="#00008b"/>
<rect x="311" y="320" width="5" height="11" fill="#00ff00"/>
<rect x="312" y="321" width="3" height="9" fill="#fff"/>
<rect x="313" y="316" width="1" height="36" fill="#00008b"/>
<rect x="311" y="329" width="5" height="23" fill="#00008b"/>
<rect x="319" y="269" width="5" height="36" fill="#00ff00"/>
<rect x="320" y="270" width="3" height="34" fill="#000"/>
<rect x="321" y="262" width="1" height="80" fill="#00008b"/>
<rect x="319" y="303" width="5" height="39" fill="#00008b"/>
<rect x="327" y="267" width="5" height="20" fill="#00ff00"/>
<rect x="328" y="268" width="3" height="18" fill="#fff"/>
<rect x="329" y="243" width="1" height="87" fill="#00008b"/>
<rect x="327" y="285" width="5" height="38" fill="#00008b"/>
<rect x="337" y="292" width="1" height="45" fill="#ff0000"/>
<rect x="335" y="302" width="5" height="10" fill="#ff0000"/>
<rect x="343" y="271" width="5" height="42" fill="#00ff00"/>
<rect x="344" y="272" width="3" height="40" fill="#000"/>
<rect x="345" y="262" width="1" height="62" fill="#00008b"/>
<rect x="343" y="292" width="5" height="17" fill="#00008b"/>
<rect x="353" y="258" width="1" height="43" fill="#00008b"/>
<rect x="351" y="273" width="5" height="28" fill="#00008b"/>
<rect x="359" y="236" width="5" height="21" fill="#00ff00"/>
<rect x="360" y="237" width="3" height="19" fill="#000"/>
<rect x="361" y="232" width="1" height="56" fill="#00008b"/>
<rect x="359" y="255" width="5" height="33" fill="#00008b"/>
<rect x="367" y="237" width="5" height="13" fill="#00ff00"/>
<rect x="368" y="238" width="3" height="11" fill="#fff"/>
<rect x="369" y="232" width="1" height="41" fill="#00008b"/>
<rect x="367" y="248" width="5" height="25" fill="#00008b"/>
<rect x="375" y="250" width="5" height="38" fill="#00ff00"/>
<rect x="376" y="251" width="3" height="36" fill="#fff"/>
<rect x="377" y="248" width="1" height="57" fill="#ff0000"/>
<rect x="375" y="259" width="5" height="16" fill="#ff0000"/>
<rect x="383" y="284" width="5" height="5" fill="#00ff00"/>
<rect x="384" y="285" width="3" height="3" fill="#000"/>
<rect x="385" y="262" width="1" height="43" fill="#ff0000"/>
<rect x="383" y="264" width="5" height="21" fill="#ff0000"/>
<rect x="391" y="250" width="5" height="12" fill="#00ff00"/>
<rect x="392" y="251" width="3" height="10" fill="#000"/>
<rect x="393" y="240" width="1" height="38" fill="#00008b"/>
<rect x="391" y="260" width="5" height="16" fill="#00008b"/>
<rect x="399" y="200" width="5" height="24" fill="#00ff00"/>
<rect x="400" y="201" width="3" height="22" fill="#000"/>
<rect x="401" y="189" width="1" height="80" fill="#00008b"/>
<rect x="399" y="222" width="5" height="47" fill="#00008b"/>
<rect x="407" y="197" width="5" height="10" fill="#00ff00"/>
<rect x="408" y="198" width="3" height="8" fill="#fff"/>
<rect x="409" y="197" width="1" height="50" fill="#00008b"/>
<rect x="407" y="205" width="5" height="42" fill="#00008b"/>
<rect x="415" y="176" width="5" height="19" fill="#00ff00"/>
<rect x="416" y="177" width="3" height="17" fill="#000"/>
<rect x="417" y="165" width="1" height="64" fill="#00008b"/>
<rect x="415" y="193" width="5" height="34" fill="#00008b"/>
<rect x="423" y="131" width="5" height="23" fill="#00ff00"/>
<rect x="424" y="132" width="3" height="21" fill="#000"/>
<rect x="425" y="117" width="1" height="94" fill="#00008b"/>
<rect x="423" y="152" width="5" height="59" fill="#00008b"/>
<rect x="431" y="131" width="5" height="3" fill="#00ff00"/>
<rect x="432" y="132" width="3" height="1" fill="#000"/>
<rect x="433" y="107" width="1" height="76" fill="#00008b"/>
<rect x="431" y="132" width="5" height="51" fill="#00008b"/>
<rect x="439" y="138" width="5" height="3" fill="#00ff00"/>
<rect x="440" y="139" width="3" height="1" fill="#000"/>
<rect x="441" y="118" width="1" height="43" fill="#00008b"/>
<rect x="439" y="139" width="5" height="20" fill="#00008b"/>
<rect x="447" y="146" width="5" height="4" fill="#00ff00"/>
<rect x="448" y="147" width="3" height="2" fill="#000"/>
<rect x="449" y="138" width="1" height="32" fill="#ff0000"/>
<rect x="447" y="148" width="5" height="5" fill="#ff0000"/>
<rect x="455" y="129" width="5" height="11" fill="#00ff00"/>
<rect x="456" y="130" width="3" height="9" fill="#000"/>
<rect x="457" y="123" width="1" height="29" fill="#00008b"/>
<rect x="455" y="138" width="5" height="14" fill="#00008b"/>
<rect x="463" y="130" width="5" height="6" fill="#00ff00"/>
<rect x="464" y="131" width="3" height="4" fill="#fff"/>
<rect x="465" y="109" width="1" height="47" fill="#00008b"/>
<rect x="463" y="134" width="5" height="16" fill="#00008b"/>
<rect x="471" y="174" width="5" height="20" fill="#00ff00"/>
<rect x="472" y="175" width="3" height="18" fill="#fff"/>
<rect x="473" y="139" width="1" height="70" fill="#ff0000"/>
<rect x="471" y="139" width="5" height="36" fill="#ff0000"/>
<rect x="479" y="200" width="5" height="8" fill="#00ff00"/>
<rect x="480" y="201" width="3" height="6" fill="#fff"/>
<rect x="481" y="156" width="1" height="72" fill="#ff0000"/>
<rect x="479" y="156" width="5" height="45" fill="#ff0000"/>
<rect x="487" y="190" width="5" height="14" fill="#00ff00"/>
<rect x="488" y="191" width="3" height="12" fill="#000"/>
<rect x="489" y="169" width="1" height="40" fill="#ff0000"/>
<rect x="487" y="178" width="5" height="13" fill="#ff0000"/>
<rect x="495" y="160" width="5" height="11" fill="#00ff00"/>
<rect x="496" y="161" width="3" height="9" fill="#000"/>
<rect x="497" y="148" width="1" height="39" fill="#00008b"/>
<rect x="495" y="169" width="5" height="17" fill="#00008b"/>
<rect x="503" y="160" width="5" height="13" fill="#00ff00"/>
<rect x="504" y="161" width="3" height="11" fill="#fff"/>
<rect x="505" y="157" width="1" height="30" fill="#00008b"/>
<rect x="503" y="171" width="5" height="7" fill="#00008b"/>
<rect x="511" y="194" width="5" height="8" fill="#00ff00"/>
<rect x="512" y="195" width="3" height="6" fill="#fff"/>
<rect x="513" y="172" width="1" height="60" fill="#ff0000"/>
<rect x="511" y="174" width="5" height="21" fill="#ff0000"/>
<rect x="519" y="176" width="5" height="24" fill="#00ff00"/>
<rect x="520" y="177" width="3" height="22" fill="#000"/>
<rect x="521" y="174" width="1" height="62" fill="#ff0000"/>
<rect x="519" y="183" width="5" height="16" fill="#ff0000"/>
<rect x="527" y="168" width="5" height="55" fill="#00ff00"/>
<rect x="528" y="169" width="3" height="53" fill="#fff"/>
<rect x="529" y="151" width="1" height="82" fill="#ff0000"/>
<rect x="527" y="190" width="5" height="5" fill="#ff0000"/>
<rect x="535" y="180" width="5" height="43" fill="#00ff00"/>
<rect x="536" y="181" width="3" height="41" fill="#000"/>
<rect x="537" y="169" width="1" height="82" fill="#ff0000"/>
<rect x="535" y="191" width="5" height="16" fill="#ff0000"/>
<rect x="543" y="181" width="5" height="21" fill="#00ff00"/>
<rect x="544" y="182" width="3" height="19" fill="#fff"/>
<rect x="545" y="173" width="1" height="48" fill="#00008b"/>
<rect x="543" y="193" width="5" height="8" fill="#00008b"/>
<rect x="553" y="194" width="1" height="42" fill="#ff0000"/>
<rect x="551" y="196" width="5" height="15" fill="#ff0000"/>
<rect x="559" y="228" width="5" height="17" fill="#00ff00"/>
<rect x="560" y="229" width="3" height="15" fill="#fff"/>
<rect x="561" y="194" width="1" height="70" fill="#ff0000"/>
<rect x="559" y="202" width="5" height="27" fill="#ff0000"/>
<rect x="569" y="212" width="1" height="54" fill="#ff0000"/>
<rect x="567" y="215" width="5" height="41" fill="#ff0000"/>
<rect x="575" y="279" width="5" height="22" fill="#00ff00"/>
<rect x="576" y="280" width="3" height="20" fill="#fff"/>
<rect x="577" y="231" width="1" height="71" fill="#ff0000"/>
<rect x="575" y="233" width="5" height="47" fill="#ff0000"/>
<rect x="583" y="292" width="5" height="7" fill="#00ff00"/>
<rect x="584" y="293" width="3" height="5" fill="#000"/>
<rect x="585" y="250" width="1" height="56" fill="#ff0000"/>
<rect x="583" y="252" width="5" height="41" fill="#ff0000"/>
<rect x="591" y="285" width="5" height="4" fill="#00ff00"/>
<rect x="592" y="286" width="3" height="2" fill="#000"/>
<rect x="593" y="266" width="1" height="31" fill="#ff0000"/>
<rect x="591" y="268" width="5" height="19" fill="#ff0000"/>
<rect x="599" y="283" width="5" height="6" fill="#00ff00"/>
<rect x="600" y="284" width="3" height="4" fill="#000"/>
<rect x="601" y="276" width="1" height="16" fill="#ff0000"/>
<rect x="599" y="279" width="5" height="6" fill="#ff0000"/>
<rect x="607" y="301" width="5" height="14" fill="#00ff00"/>
<rect x="608" y="302" width="3" height="12" fill="#fff"/>
<rect x="609" y="279" width="1" height="42" fill="#ff0000"/>
<rect x="607" y="281" width="5" height="21" fill="#ff0000"/>
<rect x="615" y="301" width="5" height="14" fill="#00ff00"/>
<rect x="616" y="302" width="3" height="12" fill="#000"/>
<rect x="617" y="284" width="1" height="34" fill="#ff0000"/>
<rect x="615" y="289" width="5" height="14" fill="#ff0000"/>
<rect x="623" y="266" width="5" height="10" fill="#00ff00"/>
<rect x="624" y="267" width="3" height="8" fill="#000"/>
<rect x="625" y="249" width="1" height="49" fill="#00008b"/>
<rect x="623" y="274" width="5" height="24" fill="#00008b"/>
<rect x="631" y="247" width="5" height="10" fill="#00ff00"/>
<rect x="632" y="248" width="3" height="8" fill="#000"/>
<rect x="633" y="239" width="1" height="48" fill="#00008b"/>
<rect x="631" y="255" width="5" height="32" fill="#00008b"/>
<rect x="641" y="237" width="1" height="35" fill="#00008b"/>
<rect x="639" y="247" width="5" height="25" fill="#00008b"/>
<rect x="647" y="252" width="5" height="20" fill="#00ff00"/>
<rect x="648" y="253" width="3" height="18" fill="#fff"/>
<rect x="649" y="243" width="1" height="44" fill="#ff0000"/>
<rect x="647" y="259" width="5" height="6" fill="#ff0000"/>
<rect x="657" y="259" width="1" height="31" fill="#ff0000"/>
<rect x="655" y="260" width="5" height="12" fill="#ff0000"/>
<rect x="665" y="242" width="1" height="36" fill="#00008b"/>
<rect x="663" y="261" width="5" height="6" fill="#00008b"/>
<rect x="671" y="276" width="5" height="7" fill="#00ff00"/>
<rect x="672" y="277" width="3" height="5" fill="#fff"/>
<rect x="673" y="257" width="1" height="44" fill="#ff0000"/>
<rect x="671" y="262" width="5" height="15" fill="#ff0000"/>
<rect x="679" y="296" width="5" height="27" fill="#00ff00"/>
<rect x="680" y="297" width="3" height="25" fill="#fff"/>
<rect x="681" y="257" width="1" height="68" fill="#ff0000"/>
<rect x="679" y="269" width="5" height="28" fill="#ff0000"/>
<rect x="687" y="334" width="5" height="14" fill="#00ff00"/>
<rect x="688" y="335" width="3" height="12" fill="#fff"/>
<rect x="689" y="280" width="1" height="72" fill="#ff0000"/>
<rect x="687" y="282" width="5" height="53" fill="#ff0000"/>
<rect x="695" y="336" width="5" height="12" fill="#00ff00"/>
<rect x="696" y="337" width="3" height="10" fill="#000"/>
<rect x="697" y="305" width="1" height="53" fill="#ff0000"/>
<rect x="695" y="307" width="5" height="30" fill="#ff0000"/>
<rect x="703" y="328" width="5" height="6" fill="#00ff00"/>
<rect x="704" y="329" width="3" height="4" fill="#000"/>
<rect x="705" y="302" width="1" height="32" fill="#ff0000"/>
<rect x="703" y="323" width="5" height="2" fill="#ff0000"/>
<rect x="711" y="325" width="5" height="5" fill="#00ff00"/>
<rect x="712" y="326" width="3" height="3" fill="#000"/>
<rect x="713" y="305" width="1" height="27" fill="#00008b"/>
<rect x="711" y="322" width="5" height="3" fill="#00008b"/>
<rect x="719" y="333" width="5" height="13" fill="#00ff00"/>
<rect x="720" y="334" width="3" height="11" fill="#fff"/>
<rect x="721" y="313" width="1" height="36" fill="#ff0000"/>
<rect x="719" y="322" width="5" height="12" fill="#ff0000"/>
<rect x="729" y="325" width="1" height="28" fill="#ff0000"/>
<rect x="727" y="327" width="5" height="19" fill="#ff0000"/>
<rect x="737" y="331" width="1" height="22" fill="#ff0000"/>
<rect x="735" y="336" width="5" height="8" fill="#ff0000"/>
<rect x="743" y="353" width="5" height="5" fill="#00ff00"/>
<rect x="744" y="354" width="3" height="3" fill="#fff"/>
<rect x="745" y="338" width="1" height="30" fill="#ff0000"/>
<rect x="743" y="340" width="5" height="14" fill="#ff0000"/>
<rect x="751" y="340" width="5" height="19" fill="#00ff00"/>
<rect x="752" y="341" width="3" height="17" fill="#000"/>
<rect x="753" y="335" width="1" height="24" fill="#ff0000"/>
<rect x="751" y="345" width="5" height="5" fill="#ff0000"/>
<rect x="761" y="336" width="1" height="17" fill="#00008b"/>
<rect x="759" y="341" width="5" height="7" fill="#00008b"/>
<rect x="769" y="325" width="1" height="30" fill="#00008b"/>
<rect x="767" y="340" width="5" height="6" fill="#00008b"/>
<rect x="777" y="342" width="1" height="6" fill="#ff0000"/>
<rect x="775" y="342" width="5" height="4" fill="#ff0000"/>
</g>
<g id="indicators" clip-path="url(#cm)">
<rect x="9" y="470" width="234" height="3" fill="#ff00ff"/>
<polyline points="243.5,471.5 281.5,471.5 290.5,457.5 322.5,457.5 329.5,423.5 361.5,423.5 369.5,407 402.5,407 409.5,341.5 410.5,340.5 444.5,340.5 448.5,338.5 779.5,338.5" fill="none" stroke="#00ff00" stroke-width="3" stroke-linejoin="round"/>
<path d="M129 491h25v1h-25z" fill="#00ff00"/>
<path d="M225 520h10v1h-10zM242 498h1v1h-1zM241 499h1v2h-1zM240 501h1v3h-1zM239 504h1v3h-1zM238 507h1v3h-1zM237 510h1v3h-1zM236 513h1v3h-1zM235 516h1v3h-1zM234 519h1v2h-1zM242 498h17v1h-17zM265 470h1v2h-1zM264 472h1v5h-1zM263 477h1v3h-1zM262 480h1v5h-1zM261 485h1v3h-1zM260 488h1v5h-1zM259 493h1v3h-1zM258 496h1v3h-1zM282 439h1v1h-1zM281 440h1v2h-1zM280 442h1v2h-1zM279 444h1v2h-1zM278 446h1v2h-1zM277 448h1v2h-1zM276 450h1v1h-1zM275 451h1v2h-1zM274 453h1v2h-1zM273 455h1v2h-1zM272 457h1v2h-1zM271 459h1v1h-1zM270 460h1v2h-1zM269 462h1v2h-1zM268 464h1v2h-1zM267 466h1v2h-1zM266 468h1v2h-1zM265 470h1v1h-1zM297 391h1v2h-1zM296 393h1v3h-1zM295 396h1v3h-1zM294 399h1v4h-1zM293 403h1v3h-1zM292 406h1v3h-1zM291 409h1v3h-1zM290 412h1v4h-1zM289 416h1v3h-1zM288 419h1v3h-1zM287 422h1v3h-1zM286 425h1v3h-1zM285 428h1v3h-1zM284 431h1v4h-1zM283 435h1v3h-1zM282 438h1v2h-1zM297 391h2v1h-2zM299 390h2v1h-2zM301 389h2v1h-2zM303 388h2v1h-2zM305 387h2v1h-2zM312 375h1v2h-1zM311 377h1v1h-1zM310 378h1v3h-1zM309 381h1v1h-1zM308 382h1v3h-1zM307 385h1v1h-1zM306 386h1v2h-1zM312 375h34v1h-34zM352 349h1v2h-1zM351 351h1v4h-1zM350 355h1v4h-1zM349 359h1v3h-1zM348 362h1v4h-1zM347 366h1v4h-1zM346 370h1v4h-1zM345 374h1v2h-1zM368 314h1v2h-1zM367 316h1v2h-1zM366 318h1v2h-1zM365 320h1v2h-1zM364 322h1v2h-1zM363 324h1v3h-1zM362 327h1v2h-1zM361 329h1v2h-1zM360 331h1v2h-1zM359 333h1v2h-1zM358 335h1v2h-1zM357 337h1v3h-1zM356 340h1v2h-1zM355 342h1v2h-1zM354 344h1v2h-1zM353 346h1v2h-1zM352 348h1v2h-1zM368 314h27v1h-27zM401 301h1v1h-1zM400 302h1v2h-1zM399 304h1v2h-1zM398 306h1v2h-1zM397 308h1v2h-1zM396 310h1v2h-1zM395 312h1v2h-1zM394 314h1v1h-1zM409 263h1v3h-1zM408 266h1v5h-1zM407 271h1v4h-1zM406 275h1v5h-1zM405 280h1v5h-1zM404 285h1v5h-1zM403 290h1v4h-1zM402 294h1v5h-1zM401 299h1v3h-1zM409 263h9v1h-9zM424 228h1v3h-1zM423 231h1v5h-1zM422 236h1v5h-1zM421 241h1v5h-1zM420 246h1v5h-1zM419 251h1v5h-1zM418 256h1v5h-1zM417 261h1v3h-1zM433 211h1v1h-1zM432 212h1v2h-1zM431 214h1v2h-1zM430 216h1v2h-1zM429 218h1v2h-1zM428 220h1v2h-1zM427 222h1v2h-1zM426 224h1v2h-1zM425 226h1v2h-1zM424 228h1v1h-1zM433 211h1v1h-1zM434 210h2v1h-2zM436 209h1v1h-1zM437 208h1v1h-1zM438 207h2v1h-2zM440 206h1v1h-1zM440 206h11v1h-11zM457 193h1v1h-1zM456 194h1v2h-1zM455 196h1v2h-1zM454 198h1v2h-1zM453 200h1v2h-1zM452 202h1v2h-1zM451 204h1v2h-1zM450 206h1v1h-1zM457 193h121v1h-121z" fill="#00ff00"/>
<path d="M625 255h17v1h-17z" fill="#00ff00"/>
<path d="M9 466h1v1h-1zM10 467h1v2h-1zM11 469h1v1h-1zM12 470h1v2h-1zM13 472h1v1h-1zM14 473h1v1h-1zM15 474h1v2h-1zM16 476h1v1h-1zM17 477h1v2h-1zM18 479h1v1h-1zM19 480h1v2h-1zM20 482h1v1h-1zM21 483h1v1h-1zM22 484h1v2h-1zM23 486h1v1h-1zM24 487h1v2h-1zM25 489h1v1h-1zM25 489h68v1h-68zM92 489h1v1h-1zM93 490h3v1h-3zM96 491h1v1h-1zM96 491h34v1h-34z" fill="#ff0000"/>
<path d="M153 491h13v1h-13zM165 491h1v1h-1zM166 492h2v1h-2zM168 493h2v1h-2zM170 494h2v1h-2zM172 495h1v1h-1zM172 495h1v1h-1zM173 496h1v1h-1zM174 497h1v1h-1zM175 498h1v1h-1zM176 499h1v1h-1zM177 500h1v1h-1zM177 500h1v1h-1zM178 501h1v1h-1zM179 502h1v2h-1zM180 504h1v1h-1zM181 505h1v1h-1zM182 506h1v1h-1zM183 507h1v1h-1zM184 508h1v2h-1zM185 510h1v1h-1zM186 511h1v1h-1zM187 512h1v1h-1zM188 513h1v2h-1zM189 515h1v1h-1zM190 516h1v1h-1zM191 517h1v1h-1zM192 518h1v1h-1zM193 519h1v2h-1zM193 520h33v1h-33z" fill="#ff0000"/>
<path d="M578 193h1v5h-1zM579 198h1v5h-1zM580 203h1v4h-1zM581 207h1v5h-1zM582 212h1v4h-1zM583 216h1v5h-1zM584 221h1v4h-1zM585 225h1v4h-1zM585 228h2v1h-2zM587 229h5v1h-5zM592 230h1v1h-1zM592 230h2v1h-2zM594 231h2v1h-2zM596 232h1v1h-1zM596 232h1v1h-1zM597 233h2v1h-2zM599 234h1v1h-1zM600 235h1v1h-1zM601 236h1v1h-1zM601 236h1v1h-1zM602 237h1v1h-1zM603 238h1v1h-1zM604 239h1v1h-1zM605 240h1v1h-1zM606 241h1v2h-1zM607 243h1v1h-1zM608 244h1v1h-1zM609 245h1v1h-1zM610 246h1v1h-1zM611 247h1v2h-1zM612 249h1v1h-1zM613 250h1v1h-1zM614 251h1v1h-1zM615 252h1v1h-1zM616 253h1v2h-1zM617 255h1v1h-1zM617 255h9v1h-9z" fill="#ff0000"/>
<path d="M641 255h42v1h-42zM682 255h1v3h-1zM683 258h1v2h-1zM684 260h1v2h-1zM685 262h1v2h-1zM686 264h1v3h-1zM687 267h1v2h-1zM688 269h1v2h-1zM688 270h1v1h-1zM689 271h1v1h-1zM690 272h1v1h-1zM690 272h1v1h-1zM691 273h2v1h-2zM693 274h2v1h-2zM695 275h2v1h-2zM697 276h2v1h-2zM698 276h17v1h-17zM714 276h1v1h-1zM715 277h2v1h-2zM717 278h3v1h-3zM719 278h1v1h-1zM720 280h2v1h-2zM722 282h1v1h-1zM722 282h1v1h-1zM723 283h1v2h-1zM724 285h1v4h-1zM725 289h1v2h-1zM726 291h1v4h-1zM726 294h1v1h-1zM727 295h1v4h-1zM728 299h1v5h-1zM729 304h1v3h-1zM729 306h4v1h-4zM733 307h7v1h-7zM740 308h1v1h-1zM740 308h1v1h-1zM741 309h1v1h-1zM742 310h1v1h-1zM743 311h1v1h-1zM744 312h1v1h-1zM745 313h1v1h-1zM746 314h1v1h-1zM746 314h13v1h-13zM758 315h2v1h-2zM760 316h1v1h-1zM760 316h11v1h-11zM770 316h1v1h-1zM771 317h1v1h-1zM772 318h1v1h-1zM773 319h1v1h-1zM774 320h1v1h-1zM775 321h1v1h-1zM776 322h1v1h-1zM777 323h1v1h-1zM778 324h1v1h-1z" fill="#ff0000"/>
<path d="M9 474h1v1h-1zM10 475h2v1h-2zM12 476h2v1h-2zM14 477h2v1h-2zM16 478h1v1h-1zM17 479h2v1h-2zM19 480h2v1h-2zM21 481h1v1h-1zM22 482h2v1h-2zM24 483h2v1h-2zM26 484h2v1h-2zM28 485h1v1h-1zM29 486h2v1h-2zM31 487h2v1h-2zM33 488h1v1h-1zM34 489h2v1h-2zM36 490h2v1h-2zM38 491h2v1h-2zM40 492h1v1h-1zM41 493h2v1h-2zM43 494h2v1h-2zM45 495h1v1h-1zM46 496h2v1h-2zM48 497h2v1h-2zM50 498h2v1h-2zM52 499h1v1h-1zM53 500h2v1h-2zM55 501h2v1h-2zM57 502h1v1h-1zM58 503h2v1h-2zM60 504h2v1h-2zM62 505h2v1h-2zM64 506h1v1h-1zM65 507h2v1h-2zM67 508h2v1h-2zM69 509h2v1h-2zM71 510h1v1h-1zM72 511h2v1h-2zM74 512h2v1h-2zM76 513h1v1h-1zM77 514h2v1h-2zM79 515h2v1h-2zM81 516h2v1h-2zM83 517h1v1h-1zM84 518h2v1h-2zM86 519h2v1h-2zM88 520h1v1h-1zM89 521h2v1h-2zM91 522h2v1h-2zM93 523h2v1h-2zM95 524h1v1h-1zM96 525h2v1h-2zM98 526h1v1h-1zM144 434h1v3h-1zM143 437h1v2h-1zM142 439h1v2h-1zM141 441h1v2h-1zM140 443h1v2h-1zM139 445h1v2h-1zM138 447h1v2h-1zM137 449h1v1h-1zM136 450h1v2h-1zM135 452h1v2h-1zM134 454h1v2h-1zM133 456h1v2h-1zM132 458h1v2h-1zM131 460h1v2h-1zM130 462h1v2h-1zM129 464h1v2h-1zM128 466h1v2h-1zM127 468h1v2h-1zM126 470h1v2h-1zM125 472h1v2h-1zM124 474h1v2h-1zM123 476h1v2h-1zM122 478h1v2h-1zM121 480h1v1h-1zM120 481h1v2h-1zM119 483h1v2h-1zM118 485h1v2h-1zM117 487h1v2h-1zM116 489h1v2h-1zM115 491h1v2h-1zM114 493h1v2h-1zM113 495h1v2h-1zM112 497h1v2h-1zM111 499h1v2h-1zM110 501h1v2h-1zM109 503h1v2h-1zM108 505h1v2h-1zM107 507h1v2h-1zM106 509h1v2h-1zM105 511h1v1h-1zM104 512h1v2h-1zM103 514h1v2h-1zM102 516h1v2h-1zM101 518h1v2h-1zM100 520h1v2h-1zM99 522h1v2h-1zM98 524h1v3h-1zM144 434h1v1h-1zM145 435h1v3h-1zM146 438h1v3h-1zM147 441h1v3h-1zM148 444h1v3h-1zM149 447h1v3h-1zM150 450h1v2h-1zM151 452h1v3h-1zM152 455h1v3h-1zM153 458h1v3h-1zM154 461h1v3h-1zM155 464h1v3h-1zM156 467h1v3h-1zM157 470h1v3h-1zM158 473h1v3h-1zM159 476h1v3h-1zM160 479h1v2h-1zM161 481h1v3h-1zM162 484h1v3h-1zM163 487h1v3h-1zM164 490h1v3h-1zM165 493h1v3h-1zM166 496h1v3h-1zM167 499h1v3h-1zM168 502h1v3h-1zM169 505h1v3h-1zM170 508h1v2h-1zM171 510h1v3h-1zM172 513h1v3h-1zM173 516h1v3h-1zM174 519h1v3h-1zM175 522h1v3h-1zM176 525h1v3h-1zM177 528h1v3h-1zM178 531h1v3h-1zM179 534h1v3h-1zM180 537h1v2h-1zM181 539h1v3h-1zM182 542h1v3h-1zM183 545h1v3h-1zM184 548h1v3h-1zM185 551h1v3h-1zM186 554h1v1h-1zM433 106h1v2h-1zM432 108h1v2h-1zM431 110h1v2h-1zM430 112h1v1h-1zM429 113h1v2h-1zM428 115h1v2h-1zM427 117h1v2h-1zM426 119h1v2h-1zM425 121h1v1h-1zM424 122h1v2h-1zM423 124h1v2h-1zM422 126h1v2h-1zM421 128h1v2h-1zM420 130h1v1h-1zM419 131h1v2h-1zM418 133h1v2h-1zM417 135h1v2h-1zM416 137h1v2h-1zM415 139h1v1h-1zM414 140h1v2h-1zM413 142h1v2h-1zM412 144h1v2h-1zM411 146h1v2h-1zM410 148h1v1h-1zM409 149h1v2h-1zM408 151h1v2h-1zM407 153h1v2h-1zM406 155h1v2h-1zM405 157h1v2h-1zM404 159h1v1h-1zM403 160h1v2h-1zM402 162h1v2h-1zM401 164h1v2h-1zM400 166h1v2h-1zM399 168h1v1h-1zM398 169h1v2h-1zM397 171h1v2h-1zM396 173h1v2h-1zM395 175h1v2h-1zM394 177h1v1h-1zM393 178h1v2h-1zM392 180h1v2h-1zM391 182h1v2h-1zM390 184h1v2h-1zM389 186h1v1h-1zM388 187h1v2h-1zM387 189h1v2h-1zM386 191h1v2h-1zM385 193h1v2h-1zM384 195h1v1h-1zM383 196h1v2h-1zM382 198h1v2h-1zM381 200h1v2h-1zM380 202h1v2h-1zM379 204h1v1h-1zM378 205h1v2h-1zM377 207h1v2h-1zM376 209h1v2h-1zM375 211h1v2h-1zM374 213h1v1h-1zM373 214h1v2h-1zM372 216h1v2h-1zM371 218h1v2h-1zM370 220h1v2h-1zM369 222h1v2h-1zM368 224h1v1h-1zM367 225h1v2h-1zM366 227h1v2h-1zM365 229h1v2h-1zM364 231h1v2h-1zM363 233h1v1h-1zM362 234h1v2h-1zM361 236h1v2h-1zM360 238h1v2h-1zM359 240h1v2h-1zM358 242h1v1h-1zM357 243h1v2h-1zM356 245h1v2h-1zM355 247h1v2h-1zM354 249h1v2h-1zM353 251h1v1h-1zM352 252h1v2h-1zM351 254h1v2h-1zM350 256h1v2h-1zM349 258h1v2h-1zM348 260h1v1h-1zM347 261h1v2h-1zM346 263h1v2h-1zM345 265h1v2h-1zM344 267h1v2h-1zM343 269h1v1h-1zM342 270h1v2h-1zM341 272h1v2h-1zM340 274h1v2h-1zM339 276h1v2h-1zM338 278h1v2h-1zM337 280h1v1h-1zM336 281h1v2h-1zM335 283h1v2h-1zM334 285h1v2h-1zM333 287h1v2h-1zM332 289h1v1h-1zM331 290h1v2h-1zM330 292h1v2h-1zM329 294h1v2h-1zM328 296h1v2h-1zM327 298h1v1h-1zM326 299h1v2h-1zM325 301h1v2h-1zM324 303h1v2h-1zM323 305h1v2h-1zM322 307h1v1h-1zM321 308h1v2h-1zM320 310h1v2h-1zM319 312h1v2h-1zM318 314h1v2h-1zM317 316h1v1h-1zM316 317h1v2h-1zM315 319h1v2h-1zM314 321h1v2h-1zM313 323h1v2h-1zM312 325h1v1h-1zM311 326h1v2h-1zM310 328h1v2h-1zM309 330h1v2h-1zM308 332h1v2h-1zM307 334h1v1h-1zM306 335h1v2h-1zM305 337h1v2h-1zM304 339h1v2h-1zM303 341h1v2h-1zM302 343h1v2h-1zM301 345h1v1h-1zM300 346h1v2h-1zM299 348h1v2h-1zM298 350h1v2h-1zM297 352h1v2h-1zM296 354h1v1h-1zM295 355h1v2h-1zM294 357h1v2h-1zM293 359h1v2h-1zM292 361h1v2h-1zM291 363h1v1h-1zM290 364h1v2h-1zM289 366h1v2h-1zM288 368h1v2h-1zM287 370h1v2h-1zM286 372h1v1h-1zM285 373h1v2h-1zM284 375h1v2h-1zM283 377h1v2h-1zM282 379h1v2h-1zM281 381h1v1h-1zM280 382h1v2h-1zM279 384h1v2h-1zM278 386h1v2h-1zM277 388h1v2h-1zM276 390h1v1h-1zM275 391h1v2h-1zM274 393h1v2h-1zM273 395h1v2h-1zM272 397h1v2h-1zM271 399h1v1h-1zM270 400h1v2h-1zM269 402h1v2h-1zM268 404h1v2h-1zM267 406h1v2h-1zM266 408h1v2h-1zM265 410h1v1h-1zM264 411h1v2h-1zM263 413h1v2h-1zM262 415h1v2h-1zM261 417h1v2h-1zM260 419h1v1h-1zM259 420h1v2h-1zM258 422h1v2h-1zM257 424h1v2h-1zM256 426h1v2h-1zM255 428h1v1h-1zM254 429h1v2h-1zM253 431h1v2h-1zM252 433h1v2h-1zM251 435h1v2h-1zM250 437h1v1h-1zM249 438h1v2h-1zM248 440h1v2h-1zM247 442h1v2h-1zM246 444h1v2h-1zM245 446h1v1h-1zM244 447h1v2h-1zM243 449h1v2h-1zM242 451h1v2h-1zM241 453h1v2h-1zM240 455h1v1h-1zM239 456h1v2h-1zM238 458h1v2h-1zM237 460h1v2h-1zM236 462h1v2h-1zM235 464h1v2h-1zM234 466h1v1h-1zM233 467h1v2h-1zM232 469h1v2h-1zM231 471h1v2h-1zM230 473h1v2h-1zM229 475h1v1h-1zM228 476h1v2h-1zM227 478h1v2h-1zM226 480h1v2h-1zM225 482h1v2h-1zM224 484h1v1h-1zM223 485h1v2h-1zM222 487h1v2h-1zM221 489h1v2h-1zM220 491h1v2h-1zM219 493h1v1h-1zM218 494h1v2h-1zM217 496h1v2h-1zM216 498h1v2h-1zM215 500h1v2h-1zM214 502h1v1h-1zM213 503h1v2h-1zM212 505h1v2h-1zM211 507h1v2h-1zM210 509h1v2h-1zM209 511h1v1h-1zM208 512h1v2h-1zM207 514h1v2h-1zM206 516h1v2h-1zM205 518h1v2h-1zM204 520h1v1h-1zM203 521h1v2h-1zM202 523h1v2h-1zM201 525h1v2h-1zM200 527h1v2h-1zM199 529h1v2h-1zM198 531h1v1h-1zM197 532h1v2h-1zM196 534h1v2h-1zM195 536h1v2h-1zM194 538h1v2h-1zM193 540h1v1h-1zM192 541h1v2h-1zM191 543h1v2h-1zM190 545h1v2h-1zM189 547h1v2h-1zM188 549h1v1h-1zM187 550h1v2h-1zM186 552h1v3h-1zM433 106h1v1h-1zM434 107h2v1h-2zM436 108h1v1h-1zM437 109h1v1h-1zM438 110h1v1h-1zM439 111h1v1h-1zM440 112h2v1h-2zM442 113h1v1h-1zM443 114h1v1h-1zM444 115h1v1h-1zM445 116h1v1h-1zM446 117h2v1h-2zM448 118h1v1h-1zM449 119h1v1h-1zM450 120h1v1h-1zM451 121h1v1h-1zM452 122h2v1h-2zM454 123h1v1h-1zM455 124h1v1h-1zM456 125h1v1h-1zM457 126h1v1h-1zM458 127h2v1h-2zM460 128h1v1h-1zM461 129h1v1h-1zM462 130h1v1h-1zM463 131h1v1h-1zM464 132h2v1h-2zM466 133h1v1h-1zM467 134h1v1h-1zM468 135h1v1h-1zM469 136h1v1h-1zM470 137h2v1h-2zM472 138h1v1h-1zM473 139h1v1h-1zM474 140h1v1h-1zM475 141h1v1h-1zM476 142h2v1h-2zM478 143h1v1h-1zM479 144h1v1h-1zM480 145h1v1h-1zM481 146h1v1h-1zM482 147h2v1h-2zM484 148h1v1h-1zM485 149h1v1h-1zM486 150h1v1h-1zM487 151h1v1h-1zM488 152h2v1h-2zM490 153h1v1h-1zM491 154h1v1h-1zM492 155h1v1h-1zM493 156h1v1h-1zM494 157h2v1h-2zM496 158h1v1h-1zM497 159h1v1h-1zM498 160h1v1h-1zM499 161h1v1h-1zM500 162h2v1h-2zM502 163h1v1h-1zM503 164h1v1h-1zM504 165h1v1h-1zM505 166h1v1h-1zM506 167h2v1h-2zM508 168h1v1h-1zM509 169h1v1h-1zM510 170h1v1h-1zM511 171h1v1h-1zM512 172h2v1h-2zM514 173h1v1h-1zM515 174h1v1h-1zM516 175h1v1h-1zM517 176h1v1h-1zM518 177h2v1h-2zM520 178h1v1h-1zM521 179h1v1h-1zM522 180h1v1h-1zM523 181h1v1h-1zM524 182h2v1h-2zM526 183h1v1h-1zM527 184h1v1h-1zM528 185h1v1h-1zM529 186h1v1h-1zM530 187h2v1h-2zM532 188h1v1h-1zM533 189h1v1h-1zM534 190h1v1h-1zM535 191h1v1h-1zM536 192h2v1h-2zM538 193h1v1h-1zM539 194h1v1h-1zM540 195h1v1h-1zM541 196h1v1h-1zM542 197h1v1h-1zM543 198h2v1h-2zM545 199h1v1h-1zM546 200h1v1h-1zM547 201h1v1h-1zM548 202h1v1h-1zM549 203h2v1h-2zM551 204h1v1h-1zM552 205h1v1h-1zM553 206h1v1h-1zM554 207h1v1h-1zM555 208h2v1h-2zM557 209h1v1h-1zM558 210h1v1h-1zM559 211h1v1h-1zM560 212h1v1h-1zM561 213h2v1h-2zM563 214h1v1h-1zM564 215h1v1h-1zM565 216h1v1h-1zM566 217h1v1h-1zM567 218h2v1h-2zM569 219h1v1h-1zM570 220h1v1h-1zM571 221h1v1h-1zM572 222h1v1h-1zM573 223h2v1h-2zM575 224h1v1h-1zM576 225h1v1h-1zM577 226h1v1h-1zM578 227h1v1h-1zM579 228h2v1h-2zM581 229h1v1h-1zM582 230h1v1h-1zM583 231h1v1h-1zM584 232h1v1h-1zM585 233h2v1h-2zM587 234h1v1h-1zM588 235h1v1h-1zM589 236h1v1h-1zM590 237h1v1h-1zM591 238h2v1h-2zM593 239h1v1h-1zM594 240h1v1h-1zM595 241h1v1h-1zM596 242h1v1h-1zM597 243h2v1h-2zM599 244h1v1h-1zM600 245h1v1h-1zM601 246h1v1h-1zM602 247h1v1h-1zM603 248h2v1h-2zM605 249h1v1h-1zM606 250h1v1h-1zM607 251h1v1h-1zM608 252h1v1h-1zM609 253h2v1h-2zM611 254h1v1h-1zM612 255h1v1h-1zM613 256h1v1h-1zM614 257h1v1h-1zM615 258h2v1h-2zM617 259h1v1h-1zM618 260h1v1h-1zM619 261h1v1h-1zM620 262h1v1h-1zM621 263h2v1h-2zM623 264h1v1h-1zM624 265h1v1h-1zM625 266h1v1h-1zM626 267h1v1h-1zM627 268h2v1h-2zM629 269h1v1h-1zM630 270h1v1h-1zM631 271h1v1h-1zM632 272h1v1h-1zM633 273h2v1h-2zM635 274h1v1h-1zM636 275h1v1h-1zM637 276h1v1h-1zM638 277h1v1h-1zM639 278h2v1h-2zM641 279h1v1h-1zM642 280h1v1h-1zM643 281h1v1h-1zM644 282h1v1h-1zM645 283h2v1h-2zM647 284h1v1h-1zM648 285h1v1h-1zM649 286h1v1h-1zM650 287h1v1h-1zM651 288h2v1h-2zM653 289h1v1h-1zM654 290h1v1h-1zM655 291h1v1h-1zM656 292h1v1h-1zM657 293h2v1h-2zM659 294h1v1h-1zM660 295h1v1h-1zM661 296h1v1h-1zM662 297h1v1h-1zM663 298h2v1h-2zM665 299h1v1h-1zM666 300h1v1h-1zM667 301h1v1h-1zM668 302h1v1h-1zM669 303h2v1h-2zM671 304h1v1h-1zM672 305h1v1h-1zM673 306h1v1h-1zM674 307h1v1h-1zM675 308h2v1h-2zM677 309h1v1h-1zM678 310h1v1h-1zM679 311h1v1h-1zM680 312h1v1h-1zM681 313h2v1h-2zM683 314h1v1h-1zM684 315h1v1h-1zM685 316h1v1h-1zM686 317h1v1h-1zM687 318h2v1h-2zM689 319h1v1h-1zM690 320h1v1h-1zM691 321h1v1h-1zM692 322h1v1h-1zM693 323h2v1h-2zM695 324h1v1h-1zM696 325h1v1h-1zM697 326h1v1h-1zM698 327h1v1h-1zM699 328h2v1h-2zM701 329h1v1h-1zM702 330h1v1h-1zM703 331h1v1h-1zM704 332h1v1h-1zM705 333h2v1h-2zM707 334h1v1h-1zM708 335h1v1h-1zM709 336h1v1h-1zM710 337h1v1h-1zM711 338h2v1h-2zM713 339h1v1h-1zM714 340h1v1h-1zM715 341h1v1h-1zM716 342h1v1h-1zM717 343h2v1h-2zM719 344h1v1h-1zM720 345h1v1h-1zM721 346h1v1h-1zM722 347h1v1h-1zM723 348h2v1h-2zM725 349h1v1h-1zM726 350h1v1h-1zM727 351h1v1h-1zM728 352h1v1h-1zM729 353h2v1h-2zM731 354h1v1h-1zM732 355h1v1h-1zM733 356h1v1h-1zM734 357h1v1h-1zM735 358h2v1h-2zM737 359h1v1h-1zM738 360h1v1h-1zM739 361h1v1h-1zM740 362h1v1h-1zM741 363h2v1h-2zM743 364h1v1h-1zM744 365h1v1h-1zM745 366h1v1h-1z" fill="#ff0000"/>
<path d="M452 81h1v1h-1zM451 82h1v1h-1zM450 83h1v1h-1zM449 84h1v1h-1zM448 85h1v2h-1zM447 87h1v1h-1zM446 88h1v1h-1zM445 89h1v1h-1zM444 90h1v2h-1zM443 92h1v1h-1zM442 93h1v1h-1zM441 94h1v1h-1zM440 95h1v2h-1zM439 97h1v1h-1zM438 98h1v1h-1zM437 99h1v1h-1zM436 100h1v2h-1zM435 102h1v1h-1zM434 103h1v1h-1zM433 104h1v1h-1zM432 105h1v2h-1zM431 107h1v1h-1zM430 108h1v1h-1zM429 109h1v1h-1zM428 110h1v2h-1zM427 112h1v1h-1zM426 113h1v1h-1zM425 114h1v1h-1zM424 115h1v2h-1zM423 117h1v1h-1zM422 118h1v1h-1zM421 119h1v1h-1zM420 120h1v2h-1zM419 122h1v1h-1zM418 123h1v1h-1zM417 124h1v1h-1zM416 125h1v2h-1zM415 127h1v1h-1zM414 128h1v1h-1zM413 129h1v1h-1zM412 130h1v2h-1zM411 132h1v1h-1zM410 133h1v1h-1zM409 134h1v1h-1zM408 135h1v2h-1zM407 137h1v1h-1zM406 138h1v1h-1zM405 139h1v2h-1zM404 141h1v1h-1zM403 142h1v1h-1zM402 143h1v1h-1zM401 144h1v2h-1zM400 146h1v1h-1zM399 147h1v1h-1zM398 148h1v1h-1zM397 149h1v2h-1zM396 151h1v1h-1zM395 152h1v1h-1zM394 153h1v1h-1zM393 154h1v2h-1zM392 156h1v1h-1zM391 157h1v1h-1zM390 158h1v1h-1zM389 159h1v2h-1zM388 161h1v1h-1zM387 162h1v1h-1zM386 163h1v1h-1zM385 164h1v2h-1zM384 166h1v1h-1zM383 167h1v1h-1zM382 168h1v1h-1zM381 169h1v2h-1zM380 171h1v1h-1zM379 172h1v1h-1zM378 173h1v1h-1zM377 174h1v2h-1zM376 176h1v1h-1zM375 177h1v1h-1zM374 178h1v1h-1zM373 179h1v2h-1zM372 181h1v1h-1zM371 182h1v1h-1zM370 183h1v1h-1zM369 184h1v2h-1zM368 186h1v1h-1zM367 187h1v1h-1zM366 188h1v1h-1zM365 189h1v2h-1zM364 191h1v1h-1zM363 192h1v1h-1zM362 193h1v2h-1zM361 195h1v1h-1zM360 196h1v1h-1zM359 197h1v1h-1zM358 198h1v2h-1zM357 200h1v1h-1zM356 201h1v1h-1zM355 202h1v1h-1zM354 203h1v2h-1zM353 205h1v1h-1zM352 206h1v1h-1zM351 207h1v1h-1zM350 208h1v2h-1zM349 210h1v1h-1zM348 211h1v1h-1zM347 212h1v1h-1zM346 213h1v2h-1zM345 215h1v1h-1zM344 216h1v1h-1zM343 217h1v1h-1zM342 218h1v2h-1zM341 220h1v1h-1zM340 221h1v1h-1zM339 222h1v1h-1zM338 223h1v2h-1zM337 225h1v1h-1zM336 226h1v1h-1zM335 227h1v1h-1zM334 228h1v2h-1zM333 230h1v1h-1zM332 231h1v1h-1zM331 232h1v1h-1zM330 233h1v2h-1zM329 235h1v1h-1zM328 236h1v1h-1zM327 237h1v1h-1zM326 238h1v2h-1zM325 240h1v1h-1zM324 241h1v1h-1zM323 242h1v1h-1zM322 243h1v2h-1zM321 245h1v1h-1zM320 246h1v1h-1zM319 247h1v2h-1zM318 249h1v1h-1zM317 250h1v1h-1zM316 251h1v1h-1zM315 252h1v2h-1zM314 254h1v1h-1zM313 255h1v1h-1zM312 256h1v1h-1zM311 257h1v2h-1zM310 259h1v1h-1zM309 260h1v1h-1zM308 261h1v1h-1zM307 262h1v2h-1zM306 264h1v1h-1zM305 265h1v1h-1zM304 266h1v1h-1zM303 267h1v2h-1zM302 269h1v1h-1zM301 270h1v1h-1zM300 271h1v1h-1zM299 272h1v2h-1zM298 274h1v1h-1zM297 275h1v1h-1zM296 276h1v1h-1zM295 277h1v2h-1zM294 279h1v1h-1zM293 280h1v1h-1zM292 281h1v1h-1zM291 282h1v2h-1zM290 284h1v1h-1zM289 285h1v1h-1zM288 286h1v1h-1zM287 287h1v2h-1zM286 289h1v1h-1zM285 290h1v1h-1zM284 291h1v1h-1zM283 292h1v2h-1zM282 294h1v1h-1zM281 295h1v1h-1zM280 296h1v1h-1zM279 297h1v2h-1zM278 299h1v1h-1zM277 300h1v1h-1zM276 301h1v1h-1zM275 302h1v2h-1zM274 304h1v1h-1zM273 305h1v1h-1zM272 306h1v2h-1zM271 308h1v1h-1zM270 309h1v1h-1zM269 310h1v1h-1zM268 311h1v2h-1zM267 313h1v1h-1zM266 314h1v1h-1zM265 315h1v1h-1zM264 316h1v2h-1zM263 318h1v1h-1zM262 319h1v1h-1zM261 320h1v1h-1zM260 321h1v2h-1zM259 323h1v1h-1zM258 324h1v1h-1zM257 325h1v1h-1zM256 326h1v2h-1zM255 328h1v1h-1zM254 329h1v1h-1zM253 330h1v1h-1zM252 331h1v2h-1zM251 333h1v1h-1zM250 334h1v1h-1zM249 335h1v1h-1zM248 336h1v2h-1zM247 338h1v1h-1zM246 339h1v1h-1zM245 340h1v1h-1zM244 341h1v2h-1zM243 343h1v1h-1zM242 344h1v1h-1zM241 345h1v1h-1zM240 346h1v2h-1zM239 348h1v1h-1zM238 349h1v1h-1zM237 350h1v1h-1zM236 351h1v2h-1zM235 353h1v1h-1zM234 354h1v1h-1zM233 355h1v1h-1zM232 356h1v2h-1zM231 358h1v1h-1zM230 359h1v1h-1zM229 360h1v2h-1zM228 362h1v1h-1zM227 363h1v1h-1zM226 364h1v1h-1zM225 365h1v2h-1zM224 367h1v1h-1zM223 368h1v1h-1zM222 369h1v1h-1zM221 370h1v2h-1zM220 372h1v1h-1zM219 373h1v1h-1zM218 374h1v1h-1zM217 375h1v2h-1zM216 377h1v1h-1zM215 378h1v1h-1zM214 379h1v1h-1zM213 380h1v2h-1zM212 382h1v1h-1zM211 383h1v1h-1zM210 384h1v1h-1zM209 385h1v2h-1zM208 387h1v1h-1zM207 388h1v1h-1zM206 389h1v1h-1zM205 390h1v2h-1zM204 392h1v1h-1zM203 393h1v1h-1zM202 394h1v1h-1zM201 395h1v2h-1zM200 397h1v1h-1zM199 398h1v1h-1zM198 399h1v1h-1zM197 400h1v2h-1zM196 402h1v1h-1zM195 403h1v1h-1zM194 404h1v1h-1zM193 405h1v2h-1zM192 407h1v1h-1zM191 408h1v1h-1zM190 409h1v1h-1zM189 410h1v2h-1zM188 412h1v1h-1zM187 413h1v1h-1zM186 414h1v2h-1zM185 416h1v1h-1zM184 417h1v1h-1zM183 418h1v1h-1zM182 419h1v2h-1zM181 421h1v1h-1zM180 422h1v1h-1zM179 423h1v1h-1zM178 424h1v2h-1zM177 426h1v1h-1zM176 427h1v1h-1zM175 428h1v1h-1zM174 429h1v2h-1zM173 431h1v1h-1zM172 432h1v1h-1zM171 433h1v1h-1zM170 434h1v2h-1zM169 436h1v1h-1zM168 437h1v1h-1zM167 438h1v1h-1zM166 439h1v2h-1zM165 441h1v1h-1zM164 442h1v1h-1zM163 443h1v1h-1zM162 444h1v2h-1zM161 446h1v1h-1zM160 447h1v1h-1zM159 448h1v1h-1zM158 449h1v2h-1zM157 451h1v1h-1zM156 452h1v1h-1zM155 453h1v1h-1zM154 454h1v2h-1zM153 456h1v1h-1zM152 457h1v1h-1zM151 458h1v1h-1zM150 459h1v2h-1zM149 461h1v1h-1zM148 462h1v1h-1zM147 463h1v1h-1zM146 464h1v2h-1zM145 466h1v1h-1zM144 467h1v1h-1zM143 468h1v1h-1zM142 469h1v2h-1zM141 471h1v1h-1zM140 472h1v1h-1zM139 473h1v2h-1zM138 475h1v1h-1zM137 476h1v1h-1zM136 477h1v1h-1zM135 478h1v2h-1zM134 480h1v1h-1zM133 481h1v1h-1zM132 482h1v1h-1zM131 483h1v2h-1zM130 485h1v1h-1zM129 486h1v1h-1zM128 487h1v1h-1zM127 488h1v2h-1zM126 490h1v1h-1zM125 491h1v1h-1zM124 492h1v1h-1zM123 493h1v2h-1zM122 495h1v1h-1zM121 496h1v1h-1zM120 497h1v1h-1zM119 498h1v2h-1zM118 500h1v1h-1zM117 501h1v1h-1zM116 502h1v1h-1zM115 503h1v2h-1zM114 505h1v1h-1zM113 506h1v1h-1zM112 507h1v1h-1zM111 508h1v2h-1zM110 510h1v1h-1zM109 511h1v1h-1zM108 512h1v1h-1zM107 513h1v2h-1zM106 515h1v1h-1zM105 516h1v1h-1zM104 517h1v1h-1zM103 518h1v2h-1zM102 520h1v1h-1zM101 521h1v1h-1zM100 522h1v1h-1zM99 523h1v2h-1zM98 525h1v2h-1z" fill="#ff0000"/>
<path d="M98 526h3v1h-3zM101 527h4v1h-4zM105 528h3v1h-3zM108 529h4v1h-4zM112 530h3v1h-3zM115 531h4v1h-4zM119 532h3v1h-3zM122 533h4v1h-4zM126 534h3v1h-3zM129 535h3v1h-3zM132 536h4v1h-4zM136 537h3v1h-3zM139 538h4v1h-4zM143 539h3v1h-3zM146 540h4v1h-4zM150 541h3v1h-3zM153 542h4v1h-4zM157 543h3v1h-3zM160 544h3v1h-3zM163 545h4v1h-4zM167 546h3v1h-3zM170 547h4v1h-4zM174 548h3v1h-3zM177 549h4v1h-4zM181 550h3v1h-3zM184 551h4v1h-4zM188 552h3v1h-3zM191 553h3v1h-3zM194 554h1v1h-1z" fill="#008000"/>
<polyline points="98,526.5 224,568.5" fill="none" stroke="#00ff00" stroke-width="3"/>
<polyline points="195,554 617.5,317.5" fill="none" stroke="#008000" stroke-width="1" stroke-dasharray="3 4"/>
<polyline points="195,554 745.5,367.5" fill="none" stroke="#008000" stroke-width="1" stroke-dasharray="3 4"/>
<path d="M461 147l2-2.500h5.500l2.500 2.500M465 148.500q-1 3.700-4.500 4h-4" fill="none" stroke="#00008b" stroke-width="1.600" shape-rendering="auto"/>
</g>
<g id="macd">
<rect x="9" y="649" width="1" height="3" fill="#d8d8d8"/>
<rect x="17" y="649" width="1" height="7" fill="#d8d8d8"/>
<rect x="25" y="649" width="1" height="10" fill="#d8d8d8"/>
<rect x="33" y="649" width="1" height="10" fill="#d8d8d8"/>
<rect x="41" y="649" width="1" height="9" fill="#d8d8d8"/>
<rect x="49" y="649" width="1" height="11" fill="#d8d8d8"/>
<rect x="57" y="649" width="1" height="12" fill="#d8d8d8"/>
<rect x="65" y="649" width="1" height="12" fill="#d8d8d8"/>
<rect x="73" y="649" width="1" height="13" fill="#d8d8d8"/>
<rect x="81" y="649" width="1" height="13" fill="#d8d8d8"/>
<rect x="89" y="649" width="1" height="14" fill="#d8d8d8"/>
<rect x="97" y="649" width="1" height="14" fill="#d8d8d8"/>
<rect x="105" y="649" width="1" height="14" fill="#d8d8d8"/>
<rect x="113" y="649" width="1" height="13" fill="#d8d8d8"/>
<rect x="121" y="649" width="1" height="13" fill="#d8d8d8"/>
<rect x="129" y="649" width="1" height="13" fill="#d8d8d8"/>
<rect x="153" y="649" width="1" height="2" fill="#d8d8d8"/>
<rect x="161" y="649" width="1" height="6" fill="#d8d8d8"/>
<rect x="169" y="649" width="1" height="9" fill="#d8d8d8"/>
<rect x="177" y="649" width="1" height="10" fill="#d8d8d8"/>
<rect x="185" y="649" width="1" height="12" fill="#d8d8d8"/>
<rect x="193" y="649" width="1" height="12" fill="#d8d8d8"/>
<rect x="201" y="649" width="1" height="11" fill="#d8d8d8"/>
<rect x="209" y="649" width="1" height="10" fill="#d8d8d8"/>
<rect x="217" y="649" width="1" height="9" fill="#d8d8d8"/>
<rect x="225" y="649" width="1" height="2" fill="#d8d8d8"/>
<rect x="249" y="646" width="1" height="2" fill="#d8d8d8"/>
<rect x="257" y="641" width="1" height="7" fill="#d8d8d8"/>
<rect x="265" y="637" width="1" height="11" fill="#d8d8d8"/>
<rect x="273" y="631" width="1" height="17" fill="#d8d8d8"/>
<rect x="281" y="624" width="1" height="24" fill="#d8d8d8"/>
<rect x="289" y="619" width="1" height="29" fill="#d8d8d8"/>
<rect x="297" y="613" width="1" height="35" fill="#d8d8d8"/>
<rect x="305" y="609" width="1" height="39" fill="#d8d8d8"/>
<rect x="313" y="606" width="1" height="42" fill="#d8d8d8"/>
<rect x="321" y="599" width="1" height="49" fill="#d8d8d8"/>
<rect x="329" y="596" width="1" height="52" fill="#d8d8d8"/>
<rect x="337" y="597" width="1" height="51" fill="#d8d8d8"/>
<rect x="345" y="594" width="1" height="54" fill="#d8d8d8"/>
<rect x="353" y="589" width="1" height="59" fill="#d8d8d8"/>
<rect x="361" y="589" width="1" height="59" fill="#d8d8d8"/>
<rect x="369" y="588" width="1" height="60" fill="#d8d8d8"/>
<rect x="377" y="591" width="1" height="57" fill="#d8d8d8"/>
<rect x="385" y="593" width="1" height="55" fill="#d8d8d8"/>
<rect x="393" y="591" width="1" height="57" fill="#d8d8d8"/>
<rect x="401" y="590" width="1" height="58" fill="#d8d8d8"/>
<rect x="409" y="589" width="1" height="59" fill="#d8d8d8"/>
<rect x="417" y="586" width="1" height="62" fill="#d8d8d8"/>
<rect x="425" y="581" width="1" height="67" fill="#d8d8d8"/>
<rect x="433" y="578" width="1" height="70" fill="#d8d8d8"/>
<rect x="441" y="577" width="1" height="71" fill="#d8d8d8"/>
<rect x="449" y="578" width="1" height="70" fill="#d8d8d8"/>
<rect x="457" y="577" width="1" height="71" fill="#d8d8d8"/>
<rect x="465" y="579" width="1" height="69" fill="#d8d8d8"/>
<rect x="473" y="586" width="1" height="62" fill="#d8d8d8"/>
<rect x="481" y="592" width="1" height="56" fill="#d8d8d8"/>
<rect x="489" y="595" width="1" height="53" fill="#d8d8d8"/>
<rect x="497" y="598" width="1" height="50" fill="#d8d8d8"/>
<rect x="505" y="601" width="1" height="47" fill="#d8d8d8"/>
<rect x="513" y="606" width="1" height="42" fill="#d8d8d8"/>
<rect x="521" y="607" width="1" height="41" fill="#d8d8d8"/>
<rect x="529" y="613" width="1" height="35" fill="#d8d8d8"/>
<rect x="537" y="617" width="1" height="31" fill="#d8d8d8"/>
<rect x="545" y="620" width="1" height="28" fill="#d8d8d8"/>
<rect x="553" y="624" width="1" height="24" fill="#d8d8d8"/>
<rect x="561" y="630" width="1" height="18" fill="#d8d8d8"/>
<rect x="569" y="636" width="1" height="12" fill="#d8d8d8"/>
<rect x="577" y="644" width="1" height="4" fill="#d8d8d8"/>
<rect x="593" y="649" width="1" height="4" fill="#d8d8d8"/>
<rect x="601" y="649" width="1" height="8" fill="#d8d8d8"/>
<rect x="609" y="649" width="1" height="12" fill="#d8d8d8"/>
<rect x="617" y="649" width="1" height="14" fill="#d8d8d8"/>
<rect x="625" y="649" width="1" height="13" fill="#d8d8d8"/>
<rect x="633" y="649" width="1" height="11" fill="#d8d8d8"/>
<rect x="641" y="649" width="1" height="9" fill="#d8d8d8"/>
<rect x="649" y="649" width="1" height="9" fill="#d8d8d8"/>
<rect x="657" y="649" width="1" height="10" fill="#d8d8d8"/>
<rect x="665" y="649" width="1" height="9" fill="#d8d8d8"/>
<rect x="673" y="649" width="1" height="10" fill="#d8d8d8"/>
<rect x="681" y="649" width="1" height="12" fill="#d8d8d8"/>
<rect x="689" y="649" width="1" height="18" fill="#d8d8d8"/>
<rect x="697" y="649" width="1" height="21" fill="#d8d8d8"/>
<rect x="705" y="649" width="1" height="22" fill="#d8d8d8"/>
<rect x="713" y="649" width="1" height="22" fill="#d8d8d8"/>
<rect x="721" y="649" width="1" height="24" fill="#d8d8d8"/>
<rect x="729" y="649" width="1" height="25" fill="#d8d8d8"/>
<rect x="737" y="649" width="1" height="25" fill="#d8d8d8"/>
<rect x="745" y="649" width="1" height="27" fill="#d8d8d8"/>
<rect x="753" y="649" width="1" height="25" fill="#d8d8d8"/>
<rect x="761" y="649" width="1" height="25" fill="#d8d8d8"/>
<rect x="769" y="649" width="1" height="25" fill="#d8d8d8"/>
<rect x="777" y="649" width="1" height="25" fill="#d8d8d8"/>
<polyline points="9.5,642.5 42.5,651 75,659 105.5,662 125.5,661 145.5,658 168.5,656 195.5,656 218.5,658 243.5,658.5 256.5,654 264.5,651.5 275.5,648.5 298.5,634.5 328.5,616 353.5,602.5 371.5,596 386.5,593 411.5,590.5 436.5,586.5 461.5,581.5 474.5,580.5 492.5,583 512.5,588.5 520.5,592.5 551.5,607.5 571.5,616.5 586.5,627.5 604.5,639 624.5,649.5 642.5,658 680.5,659.5 697.5,661.5 722.5,665.5 743.5,671 768.5,673.5 777.5,674" fill="none" stroke="#ff0000" stroke-width="1" stroke-dasharray="3 3"/>
<polyline points="74.5,662.5 205.5,662.5" fill="none" stroke="#008000" stroke-width="1"/>
<polyline points="205.5,662.5 405.5,663 405.5,664 613.5,664" fill="none" stroke="#008000" stroke-width="1" stroke-dasharray="4 3"/>
<polyline points="205.5,663.5 260.5,664.5 449.5,668.5 454.5,670 489.5,670 492.5,671 529.5,671.5 647.5,675 725.5,676 740.5,677" fill="none" stroke="#008000" stroke-width="1" stroke-dasharray="4 3"/>
<path d="M193.5 658l-4.500 5h3v4.500h3v-4.500h3z" fill="#1a9a1a"/>
<path d="M617.5 659l-4.500 5h3v4.500h3v-4.500h3z" fill="#1a9a1a"/>
<path d="M745.5 671l-4.500 5h3v4.500h3v-4.500h3z" fill="#1a9a1a"/>
</g>
<g id="frame" fill="none" stroke="#fff">
<rect x="8.500" y="79.500" width="978" height="489"/>
<rect x="8.500" y="570.500" width="978" height="111"/>
</g>
<line x1="9.5" y1="681" x2="9.5" y2="685" stroke="#fff" stroke-width="1"/>
<line x1="73.5" y1="681" x2="73.5" y2="685" stroke="#fff" stroke-width="1"/>
<line x1="137.5" y1="681" x2="137.5" y2="685" stroke="#fff" stroke-width="1"/>
<line x1="201.5" y1="681" x2="201.5" y2="685" stroke="#fff" stroke-width="1"/>
<line x1="265.5" y1="681" x2="265.5" y2="685" stroke="#fff" stroke-width="1"/>
<line x1="329.5" y1="681" x2="329.5" y2="685" stroke="#fff" stroke-width="1"/>
<line x1="393.5" y1="681" x2="393.5" y2="685" stroke="#fff" stroke-width="1"/>
<line x1="457.5" y1="681" x2="457.5" y2="685" stroke="#fff" stroke-width="1"/>
<line x1="521.5" y1="681" x2="521.5" y2="685" stroke="#fff" stroke-width="1"/>
<line x1="585.5" y1="681" x2="585.5" y2="685" stroke="#fff" stroke-width="1"/>
<line x1="649.5" y1="681" x2="649.5" y2="685" stroke="#fff" stroke-width="1"/>
<line x1="713.5" y1="681" x2="713.5" y2="685" stroke="#fff" stroke-width="1"/>
<line x1="777.5" y1="681" x2="777.5" y2="685" stroke="#fff" stroke-width="1"/>
<path d="M785 80h9l-4.500 5z" fill="#8797a8" shape-rendering="auto"/>
</svg>
<div class="r" style="left:12px;top:82px;width:171px;height:11px;background:#000;"></div>
<span id="t20" class="t" style="left:12.5px;top:81.53px;font-size:10px;line-height:12px;color:#fff;letter-spacing:-0.227px;">USDJPY,Daily&nbsp; 79.84 79.86 79.81 79.84</span>
<span id="t21" class="t" style="left:12.5px;top:92.08px;font-size:9px;line-height:11px;color:#fff;letter-spacing:0.217px;">Процент прибыли относительно баланса на начало года</span>
<span id="t22" class="t" style="left:37px;top:110.84px;font-size:12px;line-height:14px;color:#868686;letter-spacing:0.289px;">Прибыль</span>
<span id="t23" class="t" style="left:159px;top:110.84px;font-size:12px;line-height:14px;color:#868686;">в пунктах</span>
<span id="t24" class="t" style="left:274px;top:110.84px;font-size:12px;line-height:14px;color:#868686;letter-spacing:-0.058px;">в валюте</span>
<span id="t25" class="t" style="left:12px;top:122.84px;font-size:12px;line-height:14px;color:#868686;letter-spacing:0.233px;">Текущая прибыль</span>
<span id="t26" class="t" style="left:174px;top:122.84px;font-size:12px;line-height:14px;color:#868686;">0</span>
<span id="t27" class="t" style="left:239px;top:122.84px;font-size:12px;line-height:14px;color:#868686;letter-spacing:0.880px;">0.00</span>
<span id="t28" class="t" style="left:314px;top:122.84px;font-size:12px;line-height:14px;color:#868686;">0.00 %</span>
<span id="t29" class="t" style="left:12px;top:134.84px;font-size:12px;line-height:14px;color:#868686;letter-spacing:0.240px;">Прибыль за сегодня</span>
<span id="t30" class="t" style="left:174px;top:134.84px;font-size:12px;line-height:14px;color:#868686;">0</span>
<span id="t31" class="t" style="left:239px;top:134.84px;font-size:12px;line-height:14px;color:#868686;letter-spacing:0.880px;">0.00</span>
<span id="t32" class="t" style="left:314px;top:134.84px;font-size:12px;line-height:14px;color:#868686;">0.00 %</span>
<span id="t33" class="t" style="left:12px;top:146.84px;font-size:12px;line-height:14px;color:#868686;letter-spacing:0.292px;">Прибыль за 2012.05.14</span>
<span id="t34" class="t" style="left:174px;top:146.84px;font-size:12px;line-height:14px;color:#868686;">0</span>
<span id="t35" class="t" style="left:239px;top:146.84px;font-size:12px;line-height:14px;color:#868686;letter-spacing:0.880px;">0.00</span>
<span id="t36" class="t" style="left:314px;top:146.84px;font-size:12px;line-height:14px;color:#868686;">0.00 %</span>
<span id="t37" class="t" style="left:12px;top:158.84px;font-size:12px;line-height:14px;color:#868686;letter-spacing:0.337px;">Прибыль за 2012.05.11</span>
<span id="t38" class="t" style="left:174px;top:158.84px;font-size:12px;line-height:14px;color:#868686;">0</span>
<span id="t39" class="t" style="left:239px;top:158.84px;font-size:12px;line-height:14px;color:#868686;letter-spacing:0.880px;">0.00</span>
<span id="t40" class="t" style="left:314px;top:158.84px;font-size:12px;line-height:14px;color:#868686;">0.00 %</span>
<span id="t41" class="t" style="left:12px;top:170.84px;font-size:12px;line-height:14px;color:#868686;letter-spacing:0.292px;">Прибыль за 2012.05.10</span>
<span id="t42" class="t" style="left:174px;top:170.84px;font-size:12px;line-height:14px;color:#868686;">0</span>
<span id="t43" class="t" style="left:239px;top:170.84px;font-size:12px;line-height:14px;color:#868686;letter-spacing:0.880px;">0.00</span>
<span id="t44" class="t" style="left:314px;top:170.84px;font-size:12px;line-height:14px;color:#868686;">0.00 %</span>
<span id="t45" class="t" style="left:12px;top:182.84px;font-size:12px;line-height:14px;color:#868686;letter-spacing:0.292px;">Прибыль за 2012.05.09</span>
<span id="t46" class="t" style="left:174px;top:182.84px;font-size:12px;line-height:14px;color:#868686;">0</span>
<span id="t47" class="t" style="left:239px;top:182.84px;font-size:12px;line-height:14px;color:#868686;letter-spacing:0.880px;">0.00</span>
<span id="t48" class="t" style="left:314px;top:182.84px;font-size:12px;line-height:14px;color:#868686;">0.00 %</span>
<span id="t49" class="t" style="left:12px;top:194.84px;font-size:12px;line-height:14px;color:#868686;letter-spacing:0.255px;">Прибыль за неделю</span>
<span id="t50" class="t" style="left:174px;top:194.84px;font-size:12px;line-height:14px;color:#868686;">0</span>
<span id="t51" class="t" style="left:239px;top:194.84px;font-size:12px;line-height:14px;color:#868686;letter-spacing:0.880px;">0.00</span>
<span id="t52" class="t" style="left:314px;top:194.84px;font-size:12px;line-height:14px;color:#868686;">0.00 %</span>
<span id="t53" class="t" style="left:12px;top:206.84px;font-size:12px;line-height:14px;color:#868686;letter-spacing:0.340px;">Прибыль за месяц</span>
<span id="t54" class="t" style="left:174px;top:206.84px;font-size:12px;line-height:14px;color:#868686;">0</span>
<span id="t55" class="t" style="left:239px;top:206.84px;font-size:12px;line-height:14px;color:#868686;letter-spacing:0.880px;">0.00</span>
<span id="t56" class="t" style="left:314px;top:206.84px;font-size:12px;line-height:14px;color:#868686;">0.00 %</span>
<span id="t57" class="t" style="left:12px;top:218.84px;font-size:12px;line-height:14px;color:#868686;letter-spacing:0.222px;">Прибыль за квартал</span>
<span id="t58" class="t" style="left:174px;top:218.84px;font-size:12px;line-height:14px;color:#868686;">0</span>
<span id="t59" class="t" style="left:239px;top:218.84px;font-size:12px;line-height:14px;color:#868686;letter-spacing:0.880px;">0.00</span>
<span id="t60" class="t" style="left:314px;top:218.84px;font-size:12px;line-height:14px;color:#868686;">0.00 %</span>
<span id="t61" class="t" style="left:12px;top:230.84px;font-size:12px;line-height:14px;color:#868686;letter-spacing:0.298px;">Прибыль за год</span>
<span id="t62" class="t" style="left:174px;top:230.84px;font-size:12px;line-height:14px;color:#868686;">0</span>
<span id="t63" class="t" style="left:239px;top:230.84px;font-size:12px;line-height:14px;color:#868686;letter-spacing:0.880px;">0.00</span>
<span id="t64" class="t" style="left:314px;top:230.84px;font-size:12px;line-height:14px;color:#868686;">0.00 %</span>
<span id="t65" class="t" style="left:991.5px;top:93.64px;font-size:9.7px;line-height:12px;color:#fff;">84.25</span>
<span id="t66" class="t" style="left:991.5px;top:126.64px;font-size:9.7px;line-height:12px;color:#fff;">83.65</span>
<span id="t67" class="t" style="left:991.5px;top:159.64px;font-size:9.7px;line-height:12px;color:#fff;">83.05</span>
<span id="t68" class="t" style="left:991.5px;top:193.64px;font-size:9.7px;line-height:12px;color:#fff;">82.45</span>
<span id="t69" class="t" style="left:991.5px;top:226.64px;font-size:9.7px;line-height:12px;color:#fff;">81.85</span>
<span id="t70" class="t" style="left:991.5px;top:292.64px;font-size:9.7px;line-height:12px;color:#fff;">80.65</span>
<span id="t71" class="t" style="left:991.5px;top:325.64px;font-size:9.7px;line-height:12px;color:#fff;">80.05</span>
<span id="t72" class="t" style="left:991.5px;top:359.64px;font-size:9.7px;line-height:12px;color:#fff;">79.45</span>
<span id="t73" class="t" style="left:991.5px;top:392.64px;font-size:9.7px;line-height:12px;color:#fff;">78.85</span>
<span id="t74" class="t" style="left:991.5px;top:425.64px;font-size:9.7px;line-height:12px;color:#fff;">78.25</span>
<span id="t75" class="t" style="left:991.5px;top:458.64px;font-size:9.7px;line-height:12px;color:#fff;">77.65</span>
<span id="t76" class="t" style="left:991.5px;top:491.64px;font-size:9.7px;line-height:12px;color:#fff;">77.05</span>
<span id="t77" class="t" style="left:991.5px;top:525.64px;font-size:9.7px;line-height:12px;color:#fff;">76.45</span>
<span id="t78" class="t" style="left:991.5px;top:558.64px;font-size:9.7px;line-height:12px;color:#fff;">75.85</span>
<div class="r" style="left:988px;top:87px;width:31px;height:11px;background:#ff0000;"></div>
<div class="r" style="left:988px;top:173px;width:31px;height:11px;background:#008000;"></div>
<div class="r" style="left:988px;top:260px;width:31px;height:11px;background:#fff;"></div>
<div class="r" style="left:988px;top:338px;width:31px;height:11px;background:#fff;"></div>
<div class="r" style="left:988px;top:433px;width:31px;height:11px;background:#ff0000;"></div>
<div class="r" style="left:988px;top:519px;width:31px;height:11px;background:#ffff00;"></div>
<span id="t79" class="t" style="left:991.5px;top:86.64px;font-size:9.7px;line-height:12px;color:#000;">84.38</span>
<span id="t80" class="t" style="left:991.5px;top:172.64px;font-size:9.7px;line-height:12px;color:#000;">82.81</span>
<span id="t81" class="t" style="left:991.5px;top:259.64px;font-size:9.7px;line-height:12px;color:#000;">81.25</span>
<span id="t82" class="t" style="left:991.5px;top:337.64px;font-size:9.7px;line-height:12px;color:#000;">79.84</span>
<div class="r" style="left:988px;top:346px;width:31px;height:11px;background:#008000;"></div>
<span id="t83" class="t" style="left:991.5px;top:345.64px;font-size:9.7px;line-height:12px;color:#000;">79.69</span>
<span id="t84" class="t" style="left:991.5px;top:432.64px;font-size:9.7px;line-height:12px;color:#000;">78.13</span>
<span id="t85" class="t" style="left:991.5px;top:518.64px;font-size:9.7px;line-height:12px;color:#000;">76.56</span>
<span id="t86" class="t" style="left:990px;top:571.03px;font-size:10px;line-height:12px;color:#fff;letter-spacing:-0.419px;">1.3757</span>
<span id="t87" class="t" style="left:990px;top:641.03px;font-size:10px;line-height:12px;color:#fff;letter-spacing:-0.323px;">0.00</span>
<span id="t88" class="t" style="left:989px;top:668.03px;font-size:10px;line-height:12px;color:#fff;letter-spacing:-0.237px;">-0.5736</span>
<span id="t89" class="t" style="left:557.5px;top:94.53px;font-size:10px;line-height:12px;color:#ff0000;letter-spacing:0.458px;">D1[6/8]</span>
<span id="t90" class="t" style="left:557.5px;top:180.53px;font-size:10px;line-height:12px;color:#008000;letter-spacing:0.458px;">D1[5/8]</span>
<span id="t91" class="t" style="left:557.5px;top:354.04px;font-size:10px;line-height:12px;color:#008000;letter-spacing:0.458px;">D1[3/8]</span>
<span id="t92" class="t" style="left:557.5px;top:440.54px;font-size:10px;line-height:12px;color:#ff0000;letter-spacing:0.458px;">D1[2/8]</span>
<span id="t93" class="t" style="left:557.5px;top:527.03px;font-size:10px;line-height:12px;color:#ffff00;letter-spacing:0.458px;">D1[1/8]</span>
<span id="t94" class="t" style="left:533.5px;top:267.54px;font-size:10px;line-height:12px;color:#fff;letter-spacing:0.248px;">W1[5/8] D1PIVOT</span>
<span id="t95" class="t" style="left:491.5px;top:183.53px;font-size:10px;line-height:12px;color:#fff;letter-spacing:-0.781px;">W30</span>
<span id="t96" class="t" style="left:722px;top:304.54px;font-size:10px;line-height:12px;color:#fff;letter-spacing:-0.312px;">MN1</span>
<span id="t97" class="t" style="left:781.5px;top:325.04px;font-size:10px;line-height:12px;color:#fff;">D1</span>
<span id="t98" class="t" style="left:781.5px;top:339.54px;font-size:10px;line-height:12px;color:#fff;">W1</span>
<span id="t99" class="t" style="left:693px;top:288.04px;font-size:10px;line-height:12px;color:#fff;">4</span>
<span id="t100" class="t" style="left:93px;top:530.34px;font-size:12px;line-height:14px;color:#ffdf00;">1</span>
<span id="t101" class="t" style="left:141px;top:423.84px;font-size:12px;line-height:14px;color:#ffdf00;">2</span>
<div class="r" style="left:170px;top:540px;width:40px;height:28px;overflow:hidden"><span id="t102" class="t" style="left:11.5px;top:19.34px;font-size:12px;line-height:14px;color:#ffdf00;">3</span></div>
<span id="t103" class="t" style="left:429.5px;top:96.84px;font-size:12px;line-height:14px;color:#ffdf00;">4</span>
<span id="t104" class="t" style="left:741px;top:371.84px;font-size:12px;line-height:14px;color:#ffdf00;">5</span>
<span id="t105" class="t" style="left:12.5px;top:574.53px;font-size:10px;line-height:12px;color:#fff;letter-spacing:-0.263px;">MACD Divergence(12, 26, 9) -0.4326 -0.4503</span>
<span id="t106" class="t" style="left:8px;top:684.53px;font-size:10px;line-height:12px;color:#fff;letter-spacing:-0.500px;">2 Jan 2012</span>
<span id="t107" class="t" style="left:71.5px;top:684.53px;font-size:10px;line-height:12px;color:#fff;letter-spacing:-0.506px;">12 Jan 2012</span>
<span id="t108" class="t" style="left:135.5px;top:684.53px;font-size:10px;line-height:12px;color:#fff;letter-spacing:-0.456px;">24 Jan 2012</span>
<span id="t109" class="t" style="left:199.5px;top:684.53px;font-size:10px;line-height:12px;color:#fff;letter-spacing:-0.345px;">3 Feb 2012</span>
<span id="t110" class="t" style="left:264px;top:684.53px;font-size:10px;line-height:12px;color:#fff;letter-spacing:-0.417px;">15 Feb 2012</span>
<span id="t111" class="t" style="left:327.5px;top:684.53px;font-size:10px;line-height:12px;color:#fff;letter-spacing:-0.367px;">27 Feb 2012</span>
<span id="t112" class="t" style="left:391.5px;top:684.53px;font-size:10px;line-height:12px;color:#fff;letter-spacing:-0.288px;">8 Mar 2012</span>
<span id="t113" class="t" style="left:455.5px;top:684.53px;font-size:10px;line-height:12px;color:#fff;letter-spacing:-0.316px;">20 Mar 2012</span>
<span id="t114" class="t" style="left:519.5px;top:684.53px;font-size:10px;line-height:12px;color:#fff;letter-spacing:-0.316px;">30 Mar 2012</span>
<span id="t115" class="t" style="left:583.5px;top:684.53px;font-size:10px;line-height:12px;color:#fff;letter-spacing:-0.170px;">11 Apr 2012</span>
<span id="t116" class="t" style="left:647.5px;top:684.53px;font-size:10px;line-height:12px;color:#fff;letter-spacing:-0.294px;">23 Apr 2012</span>
<span id="t117" class="t" style="left:711.5px;top:684.53px;font-size:10px;line-height:12px;color:#fff;letter-spacing:-0.196px;">3 May 2012</span>
<span id="t118" class="t" style="left:775.5px;top:684.53px;font-size:10px;line-height:12px;color:#fff;letter-spacing:-0.183px;">15 May 2012</span>
<div class="r" style="left:4px;top:699px;width:1024px;height:1px;background:#ffffff;"></div>
<div class="r" style="left:4px;top:700px;width:1024px;height:1px;background:#fdfdfd;"></div>
<div id="tabs" class="r" style="left:4px;top:701px;width:1024px;height:20px;background:#eaeaea"></div>
<div class="r" style="left:4px;top:701px;width:428px;height:1px;background:#101010;"></div>
<div class="r" style="left:520px;top:701px;width:508px;height:1px;background:#101010;"></div>
<div class="r" style="left:5px;top:701px;width:1px;height:19px;background:#303030;"></div>
<div class="r" style="left:6px;top:702px;width:1px;height:18px;background:#fdfdfd;"></div>
<div class="r" style="left:3px;top:4px;width:1px;height:739px;background:#f8f8f8;"></div>
<div class="r" style="left:1026px;top:76px;width:2px;height:666px;background:#fbfbfb;"></div>
<div class="r" style="left:4px;top:721px;width:1024px;height:1px;background:#fbfbfb;"></div>
<div class="r" style="left:432px;top:699px;width:88px;height:20px;background:#fff;box-sizing:border-box;border:1px solid #202020;border-top:none"></div>
<span id="t119" class="t" style="left:17px;top:704.83px;font-size:10px;line-height:12px;color:#3a3a50;">EURUSD,Daily</span>
<span id="t120" class="t" style="left:105.5px;top:704.83px;font-size:10px;line-height:12px;color:#3a3a50;">XAGUSD,Daily</span>
<span id="t121" class="t" style="left:192.5px;top:704.83px;font-size:10px;line-height:12px;color:#3a3a50;letter-spacing:0.119px;">XAUUSD,Daily</span>
<span id="t122" class="t" style="left:281.5px;top:704.83px;font-size:10px;line-height:12px;color:#3a3a50;letter-spacing:0.359px;">USDCHF,H4</span>
<span id="t123" class="t" style="left:362.5px;top:704.83px;font-size:10px;line-height:12px;color:#3a3a50;">GBPUSD,H4</span>
<span id="t124" class="t" style="left:442.5px;top:704.83px;font-size:10px;line-height:12px;color:#000;letter-spacing:0.166px;">USDJPY,Daily</span>
<span id="t125" class="t" style="left:530.5px;top:704.83px;font-size:10px;line-height:12px;color:#3a3a50;letter-spacing:0.161px;">USDCAD,Daily</span>
<div class="r" style="left:96px;top:705px;width:1px;height:12px;background:#303030;"></div>
<div class="r" style="left:183px;top:705px;width:1px;height:12px;background:#303030;"></div>
<div class="r" style="left:272px;top:705px;width:1px;height:12px;background:#303030;"></div>
<div class="r" style="left:351px;top:705px;width:1px;height:12px;background:#303030;"></div>
<div class="r" style="left:612px;top:705px;width:1px;height:12px;background:#303030;"></div>
<svg class="r" style="left:998px;top:706px" width="24" height="10" viewBox="0 0 24 10"><path d="M5.500 2v6.500l-3.600-3.250zM19 2v6.500l3.600-3.250z" fill="#a4a4a4"/></svg>
<div id="status" class="r" style="left:4px;top:722px;width:1024px;height:20px;background:#eaeaea"></div>
<span id="t126" class="t" style="left:5.5px;top:726.66px;font-size:10.5px;line-height:13px;color:#111;letter-spacing:0.305px;">Для справки, нажмите F1</span>
<span id="t127" class="t" style="left:312px;top:726.66px;font-size:10.5px;line-height:13px;color:#111;letter-spacing:0.453px;">Default</span>
<span id="t128" class="t" style="left:422px;top:726.66px;font-size:10.5px;line-height:13px;color:#111;letter-spacing:0.317px;">2012.03.19 00:00</span>
<span id="t129" class="t" style="left:522px;top:726.66px;font-size:10.5px;line-height:13px;color:#111;letter-spacing:0.603px;">O: 83.37</span>
<span id="t130" class="t" style="left:594px;top:726.66px;font-size:10.5px;line-height:13px;color:#111;letter-spacing:0.400px;">H: 83.56</span>
<span id="t131" class="t" style="left:665.5px;top:726.66px;font-size:10.5px;line-height:13px;color:#111;letter-spacing:0.435px;">L: 83.01</span>
<span id="t132" class="t" style="left:734.5px;top:726.66px;font-size:10.5px;line-height:13px;color:#111;letter-spacing:0.328px;">C: 83.39</span>
<span id="t133" class="t" style="left:805.5px;top:726.66px;font-size:10.5px;line-height:13px;color:#111;letter-spacing:0.198px;">V: 8526</span>
<span id="t134" class="t" style="left:919.5px;top:726.66px;font-size:10.5px;line-height:13px;color:#111;letter-spacing:0.234px;">3643/8 kb</span>
<div class="r" style="left:307px;top:725px;width:1px;height:16px;background:#a0a0a0;"></div>
<div class="r" style="left:308px;top:725px;width:1px;height:16px;background:#fff;"></div>
<div class="r" style="left:416px;top:725px;width:1px;height:16px;background:#a0a0a0;"></div>
<div class="r" style="left:417px;top:725px;width:1px;height:16px;background:#fff;"></div>
<div class="r" style="left:518px;top:725px;width:1px;height:16px;background:#a0a0a0;"></div>
<div class="r" style="left:519px;top:725px;width:1px;height:16px;background:#fff;"></div>
<div class="r" style="left:589px;top:725px;width:1px;height:16px;background:#a0a0a0;"></div>
<div class="r" style="left:590px;top:725px;width:1px;height:16px;background:#fff;"></div>
<div class="r" style="left:661px;top:725px;width:1px;height:16px;background:#a0a0a0;"></div>
<div class="r" style="left:662px;top:725px;width:1px;height:16px;background:#fff;"></div>
<div class="r" style="left:730px;top:725px;width:1px;height:16px;background:#a0a0a0;"></div>
<div class="r" style="left:731px;top:725px;width:1px;height:16px;background:#fff;"></div>
<div class="r" style="left:801px;top:725px;width:1px;height:16px;background:#a0a0a0;"></div>
<div class="r" style="left:802px;top:725px;width:1px;height:16px;background:#fff;"></div>
<div class="r" style="left:866px;top:725px;width:1px;height:16px;background:#a0a0a0;"></div>
<div class="r" style="left:867px;top:725px;width:1px;height:16px;background:#fff;"></div>
<div class="r" style="left:872px;top:727px;width:1px;height:11px;background:#5a7a14;"></div><div class="r" style="left:872px;top:738px;width:1px;height:1px;background:#a81414;"></div><div class="r" style="left:874px;top:727px;width:1px;height:10px;background:#5a7a14;"></div><div class="r" style="left:874px;top:737px;width:1px;height:2px;background:#a81414;"></div><div class="r" style="left:876px;top:727px;width:1px;height:9px;background:#5a7a14;"></div><div class="r" style="left:876px;top:736px;width:1px;height:3px;background:#a81414;"></div><div class="r" style="left:878px;top:727px;width:1px;height:8px;background:#5a7a14;"></div><div class="r" style="left:878px;top:735px;width:1px;height:4px;background:#a81414;"></div><div class="r" style="left:880px;top:727px;width:1px;height:7px;background:#5a7a14;"></div><div class="r" style="left:880px;top:734px;width:1px;height:5px;background:#a81414;"></div><div class="r" style="left:882px;top:727px;width:1px;height:6px;background:#5a7a14;"></div><div class="r" style="left:882px;top:733px;width:1px;height:6px;background:#a81414;"></div><div class="r" style="left:884px;top:727px;width:1px;height:5px;background:#5a7a14;"></div><div class="r" style="left:884px;top:732px;width:1px;height:7px;background:#a81414;"></div><div class="r" style="left:886px;top:727px;width:1px;height:4px;background:#5a7a14;"></div><div class="r" style="left:886px;top:731px;width:1px;height:8px;background:#a81414;"></div><div class="r" style="left:888px;top:727px;width:1px;height:3px;background:#5a7a14;"></div><div class="r" style="left:888px;top:730px;width:1px;height:9px;background:#a81414;"></div><div class="r" style="left:890px;top:727px;width:1px;height:2px;background:#5a7a14;"></div><div class="r" style="left:890px;top:729px;width:1px;height:10px;background:#a81414;"></div><div class="r" style="left:892px;top:727px;width:1px;height:1px;background:#5a7a14;"></div><div class="r" style="left:892px;top:728px;width:1px;height:11px;background:#a81414;"></div><div class="r" style="left:894px;top:727px;width:1px;height:1px;background:#5a7a14;"></div><div class="r" style="left:894px;top:728px;width:1px;height:11px;background:#a81414;"></div>
<svg class="r" style="left:1013px;top:727px" width="15" height="15" viewBox="0 0 15 15"><path d="M14 1L1 14M14 5L5 14M14 9L9 14" stroke="#a0a0a0" stroke-width="1.2"/><path d="M14 2.500L2.500 14M14 6.500L6.500 14M14 10.500L10.500 14" stroke="#fff" stroke-width="1"/></svg>
<div class="r" style="left:4px;top:742px;width:1024px;height:4px;background:#4c4c4c;"></div>
<div class="r" style="left:4px;top:742px;width:1024px;height:1px;background:#222;"></div>
<div class="r" style="left:37px;top:742px;width:27px;height:4px;background:#8fb0d8;border-radius:13px 13px 0 0;border-top:1px solid #e8f0f8"></div>
<div class="r" style="left:104px;top:744px;width:154px;height:2px;background:#c8c8c8;"></div>
<div class="r" style="left:263px;top:744px;width:200px;height:2px;background:#707070;"></div>
</body></html>
